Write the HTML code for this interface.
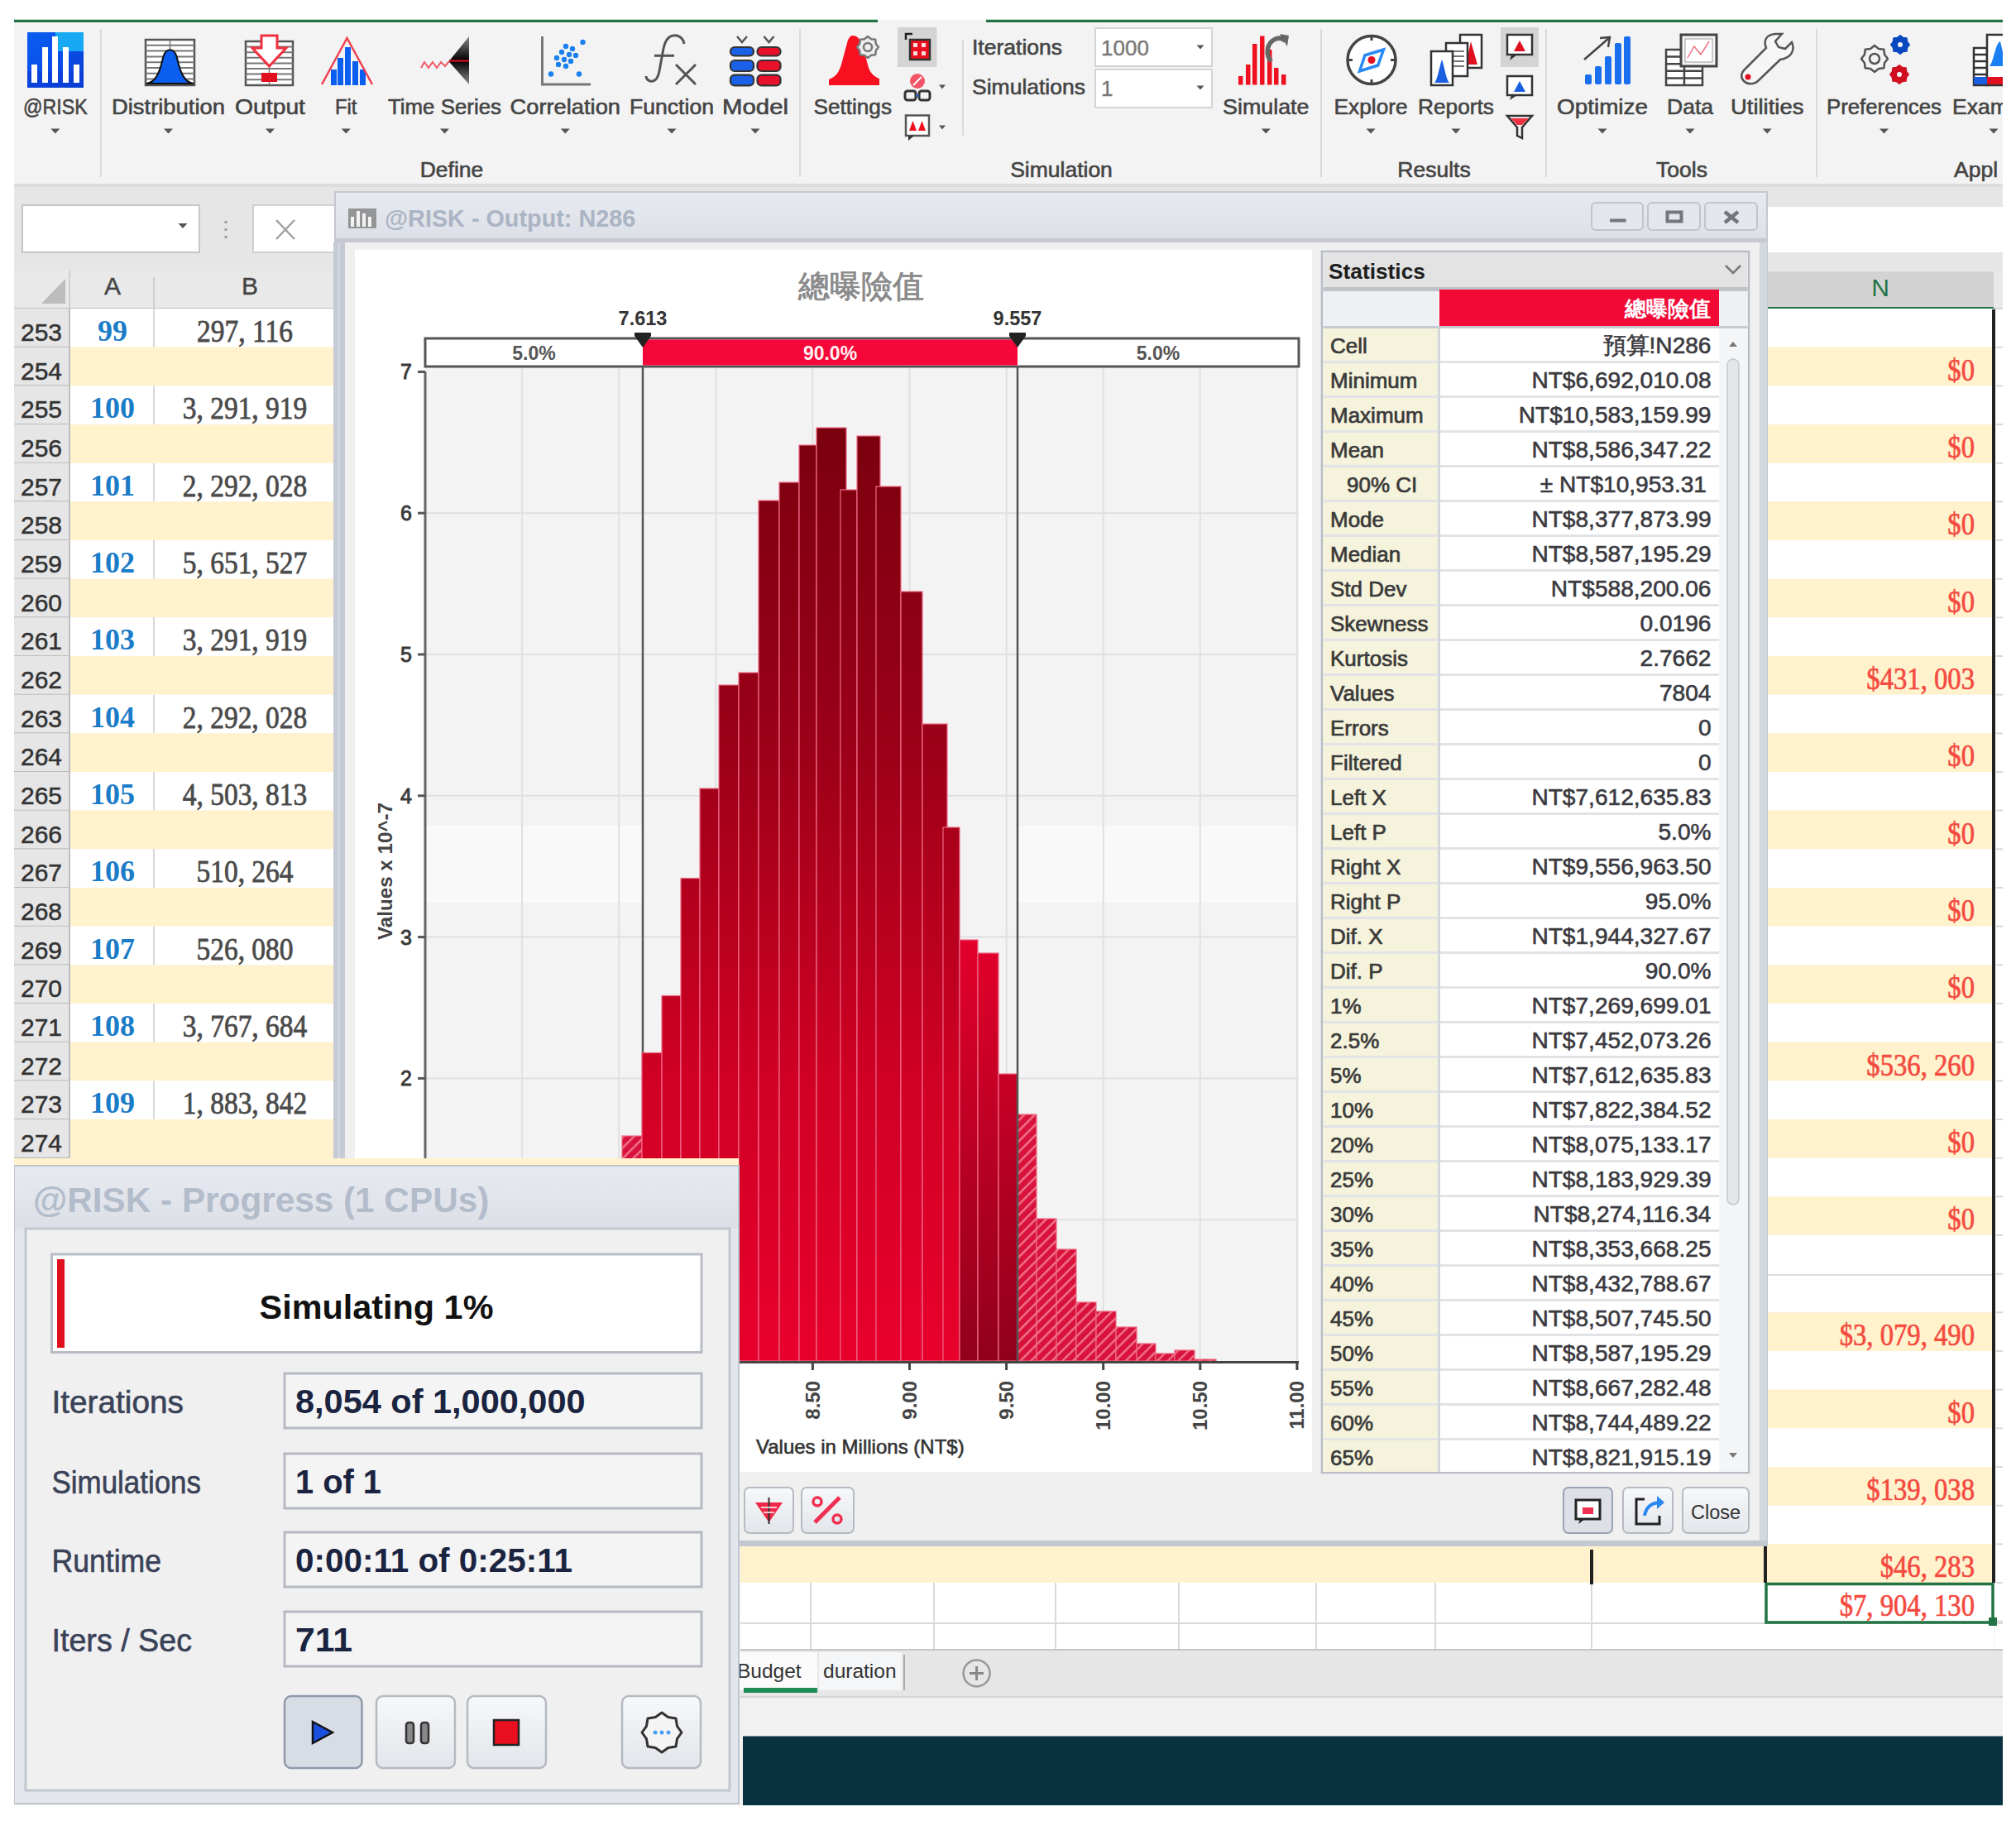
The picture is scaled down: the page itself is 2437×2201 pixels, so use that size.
<!DOCTYPE html>
<html><head><meta charset="utf-8"><title>@RISK Simulation</title>
<style>
*{margin:0;padding:0}
html,body{width:2437px;height:2201px;overflow:hidden;background:#fff}
svg{position:absolute;left:0;top:0}
</style></head><body>
<svg width="2437" height="2201" viewBox="0 0 2437 2201">
<defs>
<linearGradient id="barg" gradientUnits="userSpaceOnUse" x1="0" y1="510" x2="0" y2="1645">
<stop offset="0" stop-color="#7a000e"/><stop offset="0.35" stop-color="#9c0018"/><stop offset="0.7" stop-color="#d00024"/><stop offset="1" stop-color="#e8002c"/></linearGradient>
<pattern id="hatch" patternUnits="userSpaceOnUse" width="9" height="9" patternTransform="rotate(45)">
<rect width="9" height="9" fill="#d8123a"/><rect width="2.5" height="9" fill="#f0708a"/></pattern>
<linearGradient id="barg2" gradientUnits="userSpaceOnUse" x1="1160" y1="1130" x2="1230" y2="1645">
<stop offset="0" stop-color="#e4002c"/><stop offset="1" stop-color="#90001a"/></linearGradient>
<linearGradient id="titleg" x1="0" y1="0" x2="0" y2="1"><stop offset="0" stop-color="#e7eaf0"/><stop offset="1" stop-color="#dcdfe5"/></linearGradient>
<linearGradient id="btng" x1="0" y1="0" x2="0" y2="1"><stop offset="0" stop-color="#f7f8fa"/><stop offset="1" stop-color="#e2e5ea"/></linearGradient>
<linearGradient id="riskg" x1="0" y1="0" x2="1" y2="1"><stop offset="0" stop-color="#0a5ef0"/><stop offset="0.5" stop-color="#0a4ee8"/><stop offset="1" stop-color="#0a3fd0"/></linearGradient>
</defs>

<rect x="17" y="24" width="2404.00" height="2158.00" fill="#f3f3f3" />
<rect x="17" y="23.5" width="1044.00" height="3.50" fill="#217346" />
<rect x="1192" y="23.5" width="1229.00" height="3.50" fill="#217346" />
<rect x="17" y="27" width="2404.00" height="195.00" fill="#f3f3f3" />
<rect x="17" y="222" width="2404.00" height="4.00" fill="#dcdcdc" />
<text x="28" y="137.5" font-family="Liberation Sans" font-size="26.5" fill="#444" stroke="#444" stroke-width="0.6" text-anchor="start" textLength="77.6" lengthAdjust="spacingAndGlyphs">@RISK</text>
<path d="M61.3,155.5 L72.3,155.5 L66.8,161.5 Z" fill="#555" />
<text x="135" y="137.5" font-family="Liberation Sans" font-size="26.5" fill="#444" stroke="#444" stroke-width="0.6" text-anchor="start" textLength="137.0" lengthAdjust="spacingAndGlyphs">Distribution</text>
<path d="M198.0,155.5 L209.0,155.5 L203.5,161.5 Z" fill="#555" />
<text x="284" y="137.5" font-family="Liberation Sans" font-size="26.5" fill="#444" stroke="#444" stroke-width="0.6" text-anchor="start" textLength="85.0" lengthAdjust="spacingAndGlyphs">Output</text>
<path d="M321.0,155.5 L332.0,155.5 L326.5,161.5 Z" fill="#555" />
<text x="405" y="137.5" font-family="Liberation Sans" font-size="26.5" fill="#444" stroke="#444" stroke-width="0.6" text-anchor="start" textLength="26.5" lengthAdjust="spacingAndGlyphs">Fit</text>
<path d="M412.75,155.5 L423.75,155.5 L418.25,161.5 Z" fill="#555" />
<text x="469" y="137.5" font-family="Liberation Sans" font-size="26.5" fill="#444" stroke="#444" stroke-width="0.6" text-anchor="start" textLength="137.0" lengthAdjust="spacingAndGlyphs">Time Series</text>
<path d="M532.0,155.5 L543.0,155.5 L537.5,161.5 Z" fill="#555" />
<text x="616.6" y="137.5" font-family="Liberation Sans" font-size="26.5" fill="#444" stroke="#444" stroke-width="0.6" text-anchor="start" textLength="133.4" lengthAdjust="spacingAndGlyphs">Correlation</text>
<path d="M677.8,155.5 L688.8,155.5 L683.3,161.5 Z" fill="#555" />
<text x="761" y="137.5" font-family="Liberation Sans" font-size="26.5" fill="#444" stroke="#444" stroke-width="0.6" text-anchor="start" textLength="102.0" lengthAdjust="spacingAndGlyphs">Function</text>
<path d="M806.5,155.5 L817.5,155.5 L812.0,161.5 Z" fill="#555" />
<text x="873" y="137.5" font-family="Liberation Sans" font-size="26.5" fill="#444" stroke="#444" stroke-width="0.6" text-anchor="start" textLength="80.0" lengthAdjust="spacingAndGlyphs">Model</text>
<path d="M907.5,155.5 L918.5,155.5 L913.0,161.5 Z" fill="#555" />
<text x="983.5" y="137.5" font-family="Liberation Sans" font-size="26.5" fill="#444" stroke="#444" stroke-width="0.6" text-anchor="start" textLength="94.5" lengthAdjust="spacingAndGlyphs">Settings</text>
<text x="1478" y="137.5" font-family="Liberation Sans" font-size="26.5" fill="#444" stroke="#444" stroke-width="0.6" text-anchor="start" textLength="104.5" lengthAdjust="spacingAndGlyphs">Simulate</text>
<path d="M1524.75,155.5 L1535.75,155.5 L1530.25,161.5 Z" fill="#555" />
<text x="1612.5" y="137.5" font-family="Liberation Sans" font-size="26.5" fill="#444" stroke="#444" stroke-width="0.6" text-anchor="start" textLength="89.2" lengthAdjust="spacingAndGlyphs">Explore</text>
<path d="M1651.6,155.5 L1662.6,155.5 L1657.1,161.5 Z" fill="#555" />
<text x="1714" y="137.5" font-family="Liberation Sans" font-size="26.5" fill="#444" stroke="#444" stroke-width="0.6" text-anchor="start" textLength="92.0" lengthAdjust="spacingAndGlyphs">Reports</text>
<path d="M1754.5,155.5 L1765.5,155.5 L1760.0,161.5 Z" fill="#555" />
<text x="1882" y="137.5" font-family="Liberation Sans" font-size="26.5" fill="#444" stroke="#444" stroke-width="0.6" text-anchor="start" textLength="110.0" lengthAdjust="spacingAndGlyphs">Optimize</text>
<path d="M1931.5,155.5 L1942.5,155.5 L1937.0,161.5 Z" fill="#555" />
<text x="2015" y="137.5" font-family="Liberation Sans" font-size="26.5" fill="#444" stroke="#444" stroke-width="0.6" text-anchor="start" textLength="56.0" lengthAdjust="spacingAndGlyphs">Data</text>
<path d="M2037.5,155.5 L2048.5,155.5 L2043.0,161.5 Z" fill="#555" />
<text x="2092" y="137.5" font-family="Liberation Sans" font-size="26.5" fill="#444" stroke="#444" stroke-width="0.6" text-anchor="start" textLength="88.4" lengthAdjust="spacingAndGlyphs">Utilities</text>
<path d="M2130.7,155.5 L2141.7,155.5 L2136.2,161.5 Z" fill="#555" />
<text x="2208" y="137.5" font-family="Liberation Sans" font-size="26.5" fill="#444" stroke="#444" stroke-width="0.6" text-anchor="start" textLength="139.0" lengthAdjust="spacingAndGlyphs">Preferences</text>
<path d="M2272.0,155.5 L2283.0,155.5 L2277.5,161.5 Z" fill="#555" />
<text x="2360" y="137.5" font-family="Liberation Sans" font-size="26.5" fill="#444" stroke="#444" stroke-width="0.6" text-anchor="start" >Exam</text>
<path d="M2404.5,155.5 L2415.5,155.5 L2410,161.5 Z" fill="#555" />
<text x="546" y="214" font-family="Liberation Sans" font-size="26.5" fill="#444" stroke="#444" stroke-width="0.6" text-anchor="middle" >Define</text>
<text x="1283" y="214" font-family="Liberation Sans" font-size="26.5" fill="#444" stroke="#444" stroke-width="0.6" text-anchor="middle" >Simulation</text>
<text x="1733.5" y="214" font-family="Liberation Sans" font-size="26.5" fill="#444" stroke="#444" stroke-width="0.6" text-anchor="middle" >Results</text>
<text x="2033" y="214" font-family="Liberation Sans" font-size="26.5" fill="#444" stroke="#444" stroke-width="0.6" text-anchor="middle" >Tools</text>
<text x="2362" y="214" font-family="Liberation Sans" font-size="26.5" fill="#444" stroke="#444" stroke-width="0.6" text-anchor="start" >Appl</text>
<rect x="121" y="35" width="2.00" height="179.00" fill="#dadada" />
<rect x="966" y="35" width="2.00" height="179.00" fill="#dadada" />
<rect x="1596" y="35" width="2.00" height="179.00" fill="#dadada" />
<rect x="1868" y="35" width="2.00" height="179.00" fill="#dadada" />
<rect x="2195" y="35" width="2.00" height="179.00" fill="#dadada" />
<rect x="1163" y="48" width="2.00" height="116.00" fill="#dadada" />
<rect x="33" y="39" width="68.00" height="67.00" fill="url(#riskg)" />
<rect x="67" y="39" width="34.00" height="23.00" fill="#18b4f4" opacity="0.9"/>
<rect x="33" y="86" width="68.00" height="20.00" fill="#0a3cd6" opacity="0.6"/>
<rect x="38" y="78" width="7.00" height="22.00" fill="#ffffff" />
<rect x="51" y="57" width="7.00" height="43.00" fill="#ffffff" />
<rect x="63" y="44" width="7.00" height="56.00" fill="#ffffff" />
<rect x="76" y="57" width="7.00" height="43.00" fill="#ffffff" />
<rect x="89" y="78" width="7.00" height="22.00" fill="#ffffff" />
<rect x="176" y="48" width="59.00" height="55.00" fill="#ffffff" stroke="#555" stroke-width="2.5" />
<line x1="176" y1="54.8" x2="235" y2="54.8" stroke="#777" stroke-width="2" />
<line x1="176" y1="61.6" x2="235" y2="61.6" stroke="#777" stroke-width="2" />
<line x1="176" y1="68.4" x2="235" y2="68.4" stroke="#777" stroke-width="2" />
<line x1="176" y1="75.2" x2="235" y2="75.2" stroke="#777" stroke-width="2" />
<line x1="176" y1="82.0" x2="235" y2="82.0" stroke="#777" stroke-width="2" />
<line x1="176" y1="88.8" x2="235" y2="88.8" stroke="#777" stroke-width="2" />
<line x1="176" y1="95.6" x2="235" y2="95.6" stroke="#777" stroke-width="2" />
<line x1="205.5" y1="48" x2="205.5" y2="103" stroke="#777" stroke-width="1.5" />
<path d="M177,101 C188,100 193,88 197,70 C200,57 211,57 214,70 C218,88 223,100 234,101 Z" fill="#0a5ef0" stroke="#111" stroke-width="2" />
<rect x="297" y="50" width="57.00" height="53.00" fill="#ffffff" stroke="#555" stroke-width="2.5" />
<line x1="297" y1="56.6" x2="354" y2="56.6" stroke="#777" stroke-width="2" />
<line x1="297" y1="63.2" x2="354" y2="63.2" stroke="#777" stroke-width="2" />
<line x1="297" y1="69.8" x2="354" y2="69.8" stroke="#777" stroke-width="2" />
<line x1="297" y1="76.4" x2="354" y2="76.4" stroke="#777" stroke-width="2" />
<line x1="297" y1="83.0" x2="354" y2="83.0" stroke="#777" stroke-width="2" />
<line x1="297" y1="89.6" x2="354" y2="89.6" stroke="#777" stroke-width="2" />
<line x1="297" y1="96.19999999999999" x2="354" y2="96.19999999999999" stroke="#777" stroke-width="2" />
<line x1="325.5" y1="50" x2="325.5" y2="103" stroke="#777" stroke-width="1.5" />
<rect x="316" y="88" width="19.00" height="11.00" fill="#e01020" />
<path d="M316,43 L335,43 L335,58 L346,58 L325.5,80 L305,58 L316,58 Z" fill="#ffffff" stroke="#f03040" stroke-width="3" />
<rect x="400" y="84" width="7.00" height="19.00" fill="#0a5ef0" />
<rect x="408" y="70" width="7.00" height="33.00" fill="#0a5ef0" />
<rect x="417" y="57" width="7.00" height="46.00" fill="#0a5ef0" />
<rect x="426" y="74" width="7.00" height="29.00" fill="#0a5ef0" />
<rect x="435" y="84" width="7.00" height="19.00" fill="#0a5ef0" />
<path d="M389,102 L419.5,46 L450,102" fill="none" stroke="#f04050" stroke-width="2.5" />
<linearGradient id="tsg" x1="0" y1="0" x2="0" y2="1"><stop offset="0" stop-color="#888"/><stop offset="0.5" stop-color="#000"/><stop offset="1" stop-color="#888"/></linearGradient>
<path d="M542.5,74.3 L567,44 L567,102 Z" fill="url(#tsg)" />
<path d="M509,82 L513,75 L518,82 L523,75 L528,82 L533,75 L538,80 L543,74" fill="none" stroke="#f05a6a" stroke-width="2" />
<line x1="543" y1="73.5" x2="567" y2="73.5" stroke="#c01020" stroke-width="2.5" />
<path d="M655.5,44 L655.5,102 L714,102" fill="none" stroke="#777" stroke-width="3" />
<circle cx="704.5" cy="51" r="3.2" fill="#1a80f0"/>
<circle cx="666" cy="89.5" r="3.2" fill="#1a80f0"/>
<circle cx="700" cy="89.5" r="3.2" fill="#1a80f0"/>
<circle cx="684" cy="56" r="3.2" fill="#1a80f0"/>
<circle cx="692" cy="59" r="3.2" fill="#1a80f0"/>
<circle cx="679" cy="63" r="3.2" fill="#1a80f0"/>
<circle cx="688" cy="66" r="3.2" fill="#1a80f0"/>
<circle cx="696" cy="67" r="3.2" fill="#1a80f0"/>
<circle cx="673" cy="70" r="3.2" fill="#1a80f0"/>
<circle cx="682" cy="72" r="3.2" fill="#1a80f0"/>
<circle cx="690" cy="74" r="3.2" fill="#1a80f0"/>
<circle cx="675" cy="78" r="3.2" fill="#1a80f0"/>
<circle cx="684" cy="80" r="3.2" fill="#1a80f0"/>
<path d="M827,53 C826,46 820,42 814,43 C806,44 803,52 801,64 L797,86 C795,96 791,99 786,98 C783,97 781,95 781,92" fill="none" stroke="#555" stroke-width="3" />
<line x1="791" y1="67.3" x2="815" y2="67.3" stroke="#555" stroke-width="3" />
<path d="M817,78 L841,102 M841,78 L817,102" fill="none" stroke="#555" stroke-width="3" />
<rect x="883" y="57" width="28.00" height="10.50" fill="#1a60e8" stroke="#333" stroke-width="2.2" rx="5" />
<rect x="883" y="73" width="28.00" height="13.00" fill="#1a60e8" stroke="#333" stroke-width="2.2" rx="5" />
<rect x="883" y="90.6" width="28.00" height="12.80" fill="#1a60e8" stroke="#333" stroke-width="2.2" rx="5" />
<path d="M891,44 L897,51 L903,44" fill="none" stroke="#555" stroke-width="2.5" />
<rect x="915.5" y="57" width="28.00" height="10.50" fill="#e8102a" stroke="#333" stroke-width="2.2" rx="5" />
<rect x="915.5" y="73" width="28.00" height="13.00" fill="#e8102a" stroke="#333" stroke-width="2.2" rx="5" />
<rect x="915.5" y="90.6" width="28.00" height="12.80" fill="#e8102a" stroke="#333" stroke-width="2.2" rx="5" />
<path d="M923.5,44 L929.5,51 L935.5,44" fill="none" stroke="#555" stroke-width="2.5" />
<path d="M1002,103 L1002,96 C1010,93 1014,88 1017,78 L1024,52 C1026,44 1029,43 1031,43 C1036,43 1040,47 1043,56 L1050,82 C1053,90 1058,93 1063,95 L1063,103 Z" fill="#f81020" />
<polygon points="1062.0,57.0 1058.8,61.1 1058.2,66.2 1053.1,66.8 1049.0,70.0 1044.9,66.8 1039.8,66.2 1039.2,61.1 1036.0,57.0 1039.2,52.9 1039.8,47.8 1044.9,47.2 1049.0,44.0 1053.1,47.2 1058.2,47.8 1058.8,52.9" fill="#eeeeee" stroke="#777" stroke-width="2.5" stroke-linejoin="round"/>
<circle cx="1049" cy="57" r="5" fill="none" stroke="#777" stroke-width="2.5"/>
<rect x="1085" y="33" width="47.50" height="48.00" fill="#d4d4d4" />
<rect x="1100" y="48" width="24.00" height="24.00" fill="#e8101e" stroke="#333" stroke-width="2.5" />
<rect x="1104" y="52" width="5.00" height="5.00" fill="#ffdddd" />
<rect x="1114" y="52" width="5.00" height="5.00" fill="#ffdddd" />
<rect x="1104" y="62" width="5.00" height="5.00" fill="#ffdddd" />
<rect x="1114" y="62" width="5.00" height="5.00" fill="#ffdddd" />
<path d="M1095,48 L1095,41 L1103,41" fill="none" stroke="#222" stroke-width="2.5" />
<circle cx="1109" cy="98" r="9" fill="#f25566"/>
<line x1="1104" y1="103" x2="1114" y2="93" stroke="#fff" stroke-width="2" />
<rect x="1094" y="110" width="13.00" height="11.00" fill="#f3f3f3" stroke="#333" stroke-width="3" rx="3" />
<rect x="1111" y="110" width="13.00" height="11.00" fill="#f3f3f3" stroke="#333" stroke-width="3" rx="3" />
<line x1="1107" y1="115.5" x2="1111" y2="115.5" stroke="#2a60b0" stroke-width="3" />
<path d="M1135.0,102.5 L1143.0,102.5 L1139,107.5 Z" fill="#555" />
<rect x="1095" y="139.5" width="28.00" height="24.50" fill="#fff" stroke="#555" stroke-width="2.5" />
<path d="M1098,164 L1098,170 L1105,164" fill="#333" />
<path d="M1099,158 L1103.5,146 L1108,158 Z" fill="#f01020" />
<path d="M1110,158 L1114.5,146 L1119,158 Z" fill="#f01020" />
<path d="M1135.0,151.5 L1143.0,151.5 L1139,156.5 Z" fill="#555" />
<text x="1175" y="66" font-family="Liberation Sans" font-size="26.5" fill="#444" stroke="#444" stroke-width="0.6" text-anchor="start" >Iterations</text>
<text x="1175" y="114" font-family="Liberation Sans" font-size="26.5" fill="#444" stroke="#444" stroke-width="0.6" text-anchor="start" >Simulations</text>
<rect x="1324" y="34" width="141.00" height="46.00" fill="#ffffff" stroke="#d4d4d4" stroke-width="2" />
<rect x="1324" y="84" width="141.00" height="46.00" fill="#ffffff" stroke="#d4d4d4" stroke-width="2" />
<text x="1331" y="67" font-family="Liberation Sans" font-size="26" fill="#777" stroke="#777" stroke-width="0.4" text-anchor="start" >1000</text>
<text x="1331" y="116" font-family="Liberation Sans" font-size="26" fill="#777" stroke="#777" stroke-width="0.4" text-anchor="start" >1</text>
<path d="M1446.5,54.5 L1455.5,54.5 L1451,59.5 Z" fill="#555" />
<path d="M1446.5,103.5 L1455.5,103.5 L1451,108.5 Z" fill="#555" />
<rect x="1497" y="92" width="5.50" height="10.50" fill="#f01020" />
<rect x="1506" y="78" width="5.50" height="24.50" fill="#f01020" />
<rect x="1514" y="53" width="5.50" height="49.50" fill="#f01020" />
<rect x="1523" y="43.5" width="5.50" height="59.00" fill="#f01020" />
<rect x="1532" y="60" width="5.50" height="42.50" fill="#f01020" />
<rect x="1540" y="82" width="5.50" height="20.50" fill="#f01020" />
<rect x="1549" y="90" width="5.50" height="12.50" fill="#f01020" />
<path d="M1537,74 C1530,68 1530,52 1542,47 C1548,45 1552,47 1554,50" fill="none" stroke="#666" stroke-width="5.5" />
<path d="M1547,41 L1558,43 L1556,56 Z" fill="#666" />
<circle cx="1658" cy="72.5" r="29" fill="#fff" stroke="#444" stroke-width="3.5"/>
<line x1="1658" y1="43.5" x2="1658" y2="49" stroke="#444" stroke-width="3" />
<line x1="1658" y1="96" x2="1658" y2="101.5" stroke="#444" stroke-width="3" />
<line x1="1629" y1="72.5" x2="1635" y2="72.5" stroke="#444" stroke-width="3" />
<line x1="1681" y1="72.5" x2="1687" y2="72.5" stroke="#444" stroke-width="3" />
<path d="M1643.5,86 L1650,66.7 L1672.5,60 L1665.7,79 Z" fill="#fff" stroke="#2a8af5" stroke-width="3.5" />
<circle cx="1658" cy="72.5" r="4.5" fill="#e01020"/>
<rect x="1765" y="42" width="26.00" height="40.00" fill="#fff" stroke="#333" stroke-width="2.5" />
<path d="M1778,50 L1786,78 L1772,78 Z" fill="#e01020" />
<rect x="1748" y="52" width="26.00" height="40.00" fill="#fff" stroke="#333" stroke-width="2.5" />
<line x1="1752" y1="62" x2="1770" y2="62" stroke="#777" stroke-width="2" />
<line x1="1752" y1="68" x2="1770" y2="68" stroke="#777" stroke-width="2" />
<line x1="1752" y1="74" x2="1770" y2="74" stroke="#777" stroke-width="2" />
<line x1="1752" y1="80" x2="1770" y2="80" stroke="#777" stroke-width="2" />
<rect x="1730" y="62" width="26.00" height="41.00" fill="#fff" stroke="#333" stroke-width="2.5" />
<path d="M1734,100 C1738,96 1740,80 1743,72 C1746,80 1748,96 1752,100 Z" fill="#1a5fe0" />
<rect x="1814" y="33" width="46.00" height="48.00" fill="#d4d4d4" />
<rect x="1822" y="42" width="30.00" height="24.00" fill="#fff" stroke="#333" stroke-width="2.5" />
<path d="M1827,66 L1825,73 L1834,66" fill="#333" />
<path d="M1830,62 L1837,49 L1844,62 Z" fill="#e01020" />
<rect x="1822" y="92" width="30.00" height="23.00" fill="#fff" stroke="#333" stroke-width="2.5" />
<path d="M1827,115 L1825,121 L1834,115" fill="#333" />
<path d="M1830,111 L1837,98 L1844,111 Z" fill="#1a5fe0" />
<path d="M1822,140 L1852,140 L1840,154 L1840,167 L1834,164 L1834,154 Z" fill="none" stroke="#333" stroke-width="2.5" />
<path d="M1826,143 L1848,143 L1840,151 L1834,151 Z" fill="#f03040" />
<rect x="1916" y="90" width="8.00" height="12.00" fill="#1a6ef0" rx="2" />
<rect x="1928" y="80" width="8.00" height="22.00" fill="#1a6ef0" rx="2" />
<rect x="1940" y="68" width="8.00" height="34.00" fill="#1a6ef0" rx="2" />
<rect x="1952" y="52" width="8.00" height="50.00" fill="#1a6ef0" rx="2" />
<rect x="1963" y="44" width="8.00" height="58.00" fill="#1a6ef0" rx="2" />
<path d="M1915,72 L1945,46" fill="none" stroke="#444" stroke-width="2.5" />
<path d="M1934,46 L1946,45 L1944,57" fill="none" stroke="#444" stroke-width="2.5" />
<rect x="2014" y="60" width="44.00" height="43.00" fill="#fff" stroke="#444" stroke-width="2.5" />
<line x1="2014" y1="68.6" x2="2058" y2="68.6" stroke="#444" stroke-width="2.5" />
<line x1="2014" y1="77.2" x2="2058" y2="77.2" stroke="#444" stroke-width="2.5" />
<line x1="2014" y1="85.8" x2="2058" y2="85.8" stroke="#444" stroke-width="2.5" />
<line x1="2014" y1="94.4" x2="2058" y2="94.4" stroke="#444" stroke-width="2.5" />
<line x1="2036" y1="60" x2="2036" y2="103" stroke="#444" stroke-width="2.5" />
<rect x="2032" y="42" width="43.00" height="38.00" fill="#f4f4f4" stroke="#444" stroke-width="3" />
<rect x="2037" y="47" width="33.00" height="28.00" fill="#fff" stroke="#999" stroke-width="1" />
<path d="M2040,70 L2048,56 L2056,66 L2066,50" fill="none" stroke="#f07080" stroke-width="1.5" />
<path d="M2108,98 C2104,94 2104,88 2110,83 L2135,58 C2131,48 2136,42 2146,41 L2154,41 L2146,50 L2150,57 L2158,59 L2166,51 C2170,60 2166,70 2152,72 L2126,97 C2120,103 2112,102 2108,98 Z" fill="#f6f6f6" stroke="#555" stroke-width="2.5" />
<circle cx="2113" cy="93" r="3.5" fill="#e01020"/>
<polygon points="2282.0,71.0 2278.1,76.0 2277.3,82.3 2271.0,83.1 2266.0,87.0 2261.0,83.1 2254.7,82.3 2253.9,76.0 2250.0,71.0 2253.9,66.0 2254.7,59.7 2261.0,58.9 2266.0,55.0 2271.0,58.9 2277.3,59.7 2278.1,66.0" fill="#f3f3f3" stroke="#555" stroke-width="2.5" stroke-linejoin="round"/>
<circle cx="2266" cy="71" r="6" fill="none" stroke="#555" stroke-width="2.5"/>
<polygon points="2308.0,54.0 2305.3,57.5 2304.8,61.8 2300.5,62.3 2297.0,65.0 2293.5,62.3 2289.2,61.8 2288.7,57.5 2286.0,54.0 2288.7,50.5 2289.2,46.2 2293.5,45.7 2297.0,43.0 2300.5,45.7 2304.8,46.2 2305.3,50.5" fill="#0a48c0" stroke="#0a48c0" stroke-width="2" stroke-linejoin="round"/>
<circle cx="2297" cy="54" r="3" fill="#f3f3f3"/>
<polygon points="2307.0,90.0 2304.3,93.5 2303.8,97.8 2299.5,98.3 2296.0,101.0 2292.5,98.3 2288.2,97.8 2287.7,93.5 2285.0,90.0 2287.7,86.5 2288.2,82.2 2292.5,81.7 2296.0,79.0 2299.5,81.7 2303.8,82.2 2304.3,86.5" fill="#d01020" stroke="#d01020" stroke-width="2" stroke-linejoin="round"/>
<circle cx="2296" cy="90" r="3" fill="#f3f3f3"/>
<svg x="2380" y="38" width="41" height="70" viewBox="2380 38 41 70">
<rect x="2386" y="58" width="16.00" height="45.00" fill="#fff" stroke="#333" stroke-width="2.5" />
<line x1="2386" y1="66" x2="2402" y2="66" stroke="#333" stroke-width="2.5" />
<line x1="2386" y1="74" x2="2402" y2="74" stroke="#333" stroke-width="2.5" />
<line x1="2386" y1="82" x2="2402" y2="82" stroke="#333" stroke-width="2.5" />
<line x1="2386" y1="90" x2="2402" y2="90" stroke="#333" stroke-width="2.5" />
<rect x="2402" y="42" width="38.00" height="61.00" fill="#fff" stroke="#333" stroke-width="2.5" />
<path d="M2405,80 C2410,75 2412,52 2418,50 L2425,80 Z" fill="#1a7ff0" />
<rect x="2386" y="93" width="16.00" height="9.00" fill="#1a5fe0" />
<rect x="2402" y="93" width="38.00" height="9.00" fill="#e01020" />
</svg>
<rect x="17" y="226" width="2404.00" height="101.00" fill="#e6e6e6" />
<rect x="27" y="248" width="214.00" height="57.00" fill="#ffffff" stroke="#c6c6c6" stroke-width="2" />
<path d="M215.5,270.0 L226.5,270.0 L221,276.0 Z" fill="#555" />
<rect x="271.5" y="267" width="3.00" height="3.00" fill="#9a9a9a" />
<rect x="271.5" y="276" width="3.00" height="3.00" fill="#9a9a9a" />
<rect x="271.5" y="285" width="3.00" height="3.00" fill="#9a9a9a" />
<rect x="306" y="248" width="114.00" height="57.00" fill="#ffffff" stroke="#d0d0d0" stroke-width="2" />
<path d="M334,266 L356,289 M356,266 L334,289" fill="none" stroke="#a0a0a0" stroke-width="2.5" />
<rect x="2137" y="250" width="284.00" height="55.00" fill="#ffffff" />
<rect x="17" y="327" width="2404.00" height="46.00" fill="#e9e9e9" />
<path d="M79,337 L79,367 L50,367 Z" fill="#bdbdbd" />
<line x1="84" y1="327" x2="84" y2="373" stroke="#cfcfcf" stroke-width="2" />
<line x1="186" y1="335" x2="186" y2="373" stroke="#cfcfcf" stroke-width="2" />
<text x="136" y="356" font-family="Liberation Sans" font-size="30" fill="#444" stroke="#444" stroke-width="0.4" text-anchor="middle" >A</text>
<text x="302" y="356" font-family="Liberation Sans" font-size="30" fill="#444" stroke="#444" stroke-width="0.4" text-anchor="middle" >B</text>
<rect x="17" y="372" width="2404.00" height="2.00" fill="#c4c4c4" />
<rect x="2137" y="328" width="273.00" height="43.00" fill="#d3d3d3" />
<text x="2273" y="358" font-family="Liberation Sans" font-size="30" fill="#217346" text-anchor="middle" >N</text>
<rect x="2137" y="371" width="273.00" height="4.00" fill="#217346" />
<rect x="84" y="373.0" width="336.00" height="46.67" fill="#ffffff" />
<rect x="17" y="373.0" width="67.00" height="46.67" fill="#e6e6e6" />
<line x1="17" y1="419.66700000000003" x2="84" y2="419.66700000000003" stroke="#bdbdbd" stroke-width="2" />
<line x1="186" y1="373.0" x2="186" y2="419.66700000000003" stroke="#d8d8d8" stroke-width="2" />
<text x="25" y="412.0" font-family="Liberation Sans" font-size="30" fill="#333" stroke="#333" stroke-width="0.5" text-anchor="start" >253</text>
<rect x="84" y="419.66700000000003" width="336.00" height="46.67" fill="#fff2cc" />
<rect x="17" y="419.66700000000003" width="67.00" height="46.67" fill="#e6e6e6" />
<line x1="17" y1="466.33400000000006" x2="84" y2="466.33400000000006" stroke="#bdbdbd" stroke-width="2" />
<text x="25" y="458.66700000000003" font-family="Liberation Sans" font-size="30" fill="#333" stroke="#333" stroke-width="0.5" text-anchor="start" >254</text>
<rect x="84" y="466.334" width="336.00" height="46.67" fill="#ffffff" />
<rect x="17" y="466.334" width="67.00" height="46.67" fill="#e6e6e6" />
<line x1="17" y1="513.001" x2="84" y2="513.001" stroke="#bdbdbd" stroke-width="2" />
<line x1="186" y1="466.334" x2="186" y2="513.001" stroke="#d8d8d8" stroke-width="2" />
<text x="25" y="505.334" font-family="Liberation Sans" font-size="30" fill="#333" stroke="#333" stroke-width="0.5" text-anchor="start" >255</text>
<rect x="84" y="513.001" width="336.00" height="46.67" fill="#fff2cc" />
<rect x="17" y="513.001" width="67.00" height="46.67" fill="#e6e6e6" />
<line x1="17" y1="559.668" x2="84" y2="559.668" stroke="#bdbdbd" stroke-width="2" />
<text x="25" y="552.001" font-family="Liberation Sans" font-size="30" fill="#333" stroke="#333" stroke-width="0.5" text-anchor="start" >256</text>
<rect x="84" y="559.668" width="336.00" height="46.67" fill="#ffffff" />
<rect x="17" y="559.668" width="67.00" height="46.67" fill="#e6e6e6" />
<line x1="17" y1="606.335" x2="84" y2="606.335" stroke="#bdbdbd" stroke-width="2" />
<line x1="186" y1="559.668" x2="186" y2="606.335" stroke="#d8d8d8" stroke-width="2" />
<text x="25" y="598.668" font-family="Liberation Sans" font-size="30" fill="#333" stroke="#333" stroke-width="0.5" text-anchor="start" >257</text>
<rect x="84" y="606.335" width="336.00" height="46.67" fill="#fff2cc" />
<rect x="17" y="606.335" width="67.00" height="46.67" fill="#e6e6e6" />
<line x1="17" y1="653.0020000000001" x2="84" y2="653.0020000000001" stroke="#bdbdbd" stroke-width="2" />
<text x="25" y="645.335" font-family="Liberation Sans" font-size="30" fill="#333" stroke="#333" stroke-width="0.5" text-anchor="start" >258</text>
<rect x="84" y="653.002" width="336.00" height="46.67" fill="#ffffff" />
<rect x="17" y="653.002" width="67.00" height="46.67" fill="#e6e6e6" />
<line x1="17" y1="699.669" x2="84" y2="699.669" stroke="#bdbdbd" stroke-width="2" />
<line x1="186" y1="653.002" x2="186" y2="699.669" stroke="#d8d8d8" stroke-width="2" />
<text x="25" y="692.002" font-family="Liberation Sans" font-size="30" fill="#333" stroke="#333" stroke-width="0.5" text-anchor="start" >259</text>
<rect x="84" y="699.669" width="336.00" height="46.67" fill="#fff2cc" />
<rect x="17" y="699.669" width="67.00" height="46.67" fill="#e6e6e6" />
<line x1="17" y1="746.336" x2="84" y2="746.336" stroke="#bdbdbd" stroke-width="2" />
<text x="25" y="738.669" font-family="Liberation Sans" font-size="30" fill="#333" stroke="#333" stroke-width="0.5" text-anchor="start" >260</text>
<rect x="84" y="746.336" width="336.00" height="46.67" fill="#ffffff" />
<rect x="17" y="746.336" width="67.00" height="46.67" fill="#e6e6e6" />
<line x1="17" y1="793.003" x2="84" y2="793.003" stroke="#bdbdbd" stroke-width="2" />
<line x1="186" y1="746.336" x2="186" y2="793.003" stroke="#d8d8d8" stroke-width="2" />
<text x="25" y="785.336" font-family="Liberation Sans" font-size="30" fill="#333" stroke="#333" stroke-width="0.5" text-anchor="start" >261</text>
<rect x="84" y="793.003" width="336.00" height="46.67" fill="#fff2cc" />
<rect x="17" y="793.003" width="67.00" height="46.67" fill="#e6e6e6" />
<line x1="17" y1="839.6700000000001" x2="84" y2="839.6700000000001" stroke="#bdbdbd" stroke-width="2" />
<text x="25" y="832.003" font-family="Liberation Sans" font-size="30" fill="#333" stroke="#333" stroke-width="0.5" text-anchor="start" >262</text>
<rect x="84" y="839.6700000000001" width="336.00" height="46.67" fill="#ffffff" />
<rect x="17" y="839.6700000000001" width="67.00" height="46.67" fill="#e6e6e6" />
<line x1="17" y1="886.3370000000001" x2="84" y2="886.3370000000001" stroke="#bdbdbd" stroke-width="2" />
<line x1="186" y1="839.6700000000001" x2="186" y2="886.3370000000001" stroke="#d8d8d8" stroke-width="2" />
<text x="25" y="878.6700000000001" font-family="Liberation Sans" font-size="30" fill="#333" stroke="#333" stroke-width="0.5" text-anchor="start" >263</text>
<rect x="84" y="886.337" width="336.00" height="46.67" fill="#fff2cc" />
<rect x="17" y="886.337" width="67.00" height="46.67" fill="#e6e6e6" />
<line x1="17" y1="933.004" x2="84" y2="933.004" stroke="#bdbdbd" stroke-width="2" />
<text x="25" y="925.337" font-family="Liberation Sans" font-size="30" fill="#333" stroke="#333" stroke-width="0.5" text-anchor="start" >264</text>
<rect x="84" y="933.004" width="336.00" height="46.67" fill="#ffffff" />
<rect x="17" y="933.004" width="67.00" height="46.67" fill="#e6e6e6" />
<line x1="17" y1="979.671" x2="84" y2="979.671" stroke="#bdbdbd" stroke-width="2" />
<line x1="186" y1="933.004" x2="186" y2="979.671" stroke="#d8d8d8" stroke-width="2" />
<text x="25" y="972.004" font-family="Liberation Sans" font-size="30" fill="#333" stroke="#333" stroke-width="0.5" text-anchor="start" >265</text>
<rect x="84" y="979.671" width="336.00" height="46.67" fill="#fff2cc" />
<rect x="17" y="979.671" width="67.00" height="46.67" fill="#e6e6e6" />
<line x1="17" y1="1026.338" x2="84" y2="1026.338" stroke="#bdbdbd" stroke-width="2" />
<text x="25" y="1018.671" font-family="Liberation Sans" font-size="30" fill="#333" stroke="#333" stroke-width="0.5" text-anchor="start" >266</text>
<rect x="84" y="1026.338" width="336.00" height="46.67" fill="#ffffff" />
<rect x="17" y="1026.338" width="67.00" height="46.67" fill="#e6e6e6" />
<line x1="17" y1="1073.0049999999999" x2="84" y2="1073.0049999999999" stroke="#bdbdbd" stroke-width="2" />
<line x1="186" y1="1026.338" x2="186" y2="1073.0049999999999" stroke="#d8d8d8" stroke-width="2" />
<text x="25" y="1065.338" font-family="Liberation Sans" font-size="30" fill="#333" stroke="#333" stroke-width="0.5" text-anchor="start" >267</text>
<rect x="84" y="1073.005" width="336.00" height="46.67" fill="#fff2cc" />
<rect x="17" y="1073.005" width="67.00" height="46.67" fill="#e6e6e6" />
<line x1="17" y1="1119.672" x2="84" y2="1119.672" stroke="#bdbdbd" stroke-width="2" />
<text x="25" y="1112.005" font-family="Liberation Sans" font-size="30" fill="#333" stroke="#333" stroke-width="0.5" text-anchor="start" >268</text>
<rect x="84" y="1119.672" width="336.00" height="46.67" fill="#ffffff" />
<rect x="17" y="1119.672" width="67.00" height="46.67" fill="#e6e6e6" />
<line x1="17" y1="1166.339" x2="84" y2="1166.339" stroke="#bdbdbd" stroke-width="2" />
<line x1="186" y1="1119.672" x2="186" y2="1166.339" stroke="#d8d8d8" stroke-width="2" />
<text x="25" y="1158.672" font-family="Liberation Sans" font-size="30" fill="#333" stroke="#333" stroke-width="0.5" text-anchor="start" >269</text>
<rect x="84" y="1166.339" width="336.00" height="46.67" fill="#fff2cc" />
<rect x="17" y="1166.339" width="67.00" height="46.67" fill="#e6e6e6" />
<line x1="17" y1="1213.0059999999999" x2="84" y2="1213.0059999999999" stroke="#bdbdbd" stroke-width="2" />
<text x="25" y="1205.339" font-family="Liberation Sans" font-size="30" fill="#333" stroke="#333" stroke-width="0.5" text-anchor="start" >270</text>
<rect x="84" y="1213.006" width="336.00" height="46.67" fill="#ffffff" />
<rect x="17" y="1213.006" width="67.00" height="46.67" fill="#e6e6e6" />
<line x1="17" y1="1259.673" x2="84" y2="1259.673" stroke="#bdbdbd" stroke-width="2" />
<line x1="186" y1="1213.006" x2="186" y2="1259.673" stroke="#d8d8d8" stroke-width="2" />
<text x="25" y="1252.006" font-family="Liberation Sans" font-size="30" fill="#333" stroke="#333" stroke-width="0.5" text-anchor="start" >271</text>
<rect x="84" y="1259.673" width="336.00" height="46.67" fill="#fff2cc" />
<rect x="17" y="1259.673" width="67.00" height="46.67" fill="#e6e6e6" />
<line x1="17" y1="1306.34" x2="84" y2="1306.34" stroke="#bdbdbd" stroke-width="2" />
<text x="25" y="1298.673" font-family="Liberation Sans" font-size="30" fill="#333" stroke="#333" stroke-width="0.5" text-anchor="start" >272</text>
<rect x="84" y="1306.3400000000001" width="336.00" height="46.67" fill="#ffffff" />
<rect x="17" y="1306.3400000000001" width="67.00" height="46.67" fill="#e6e6e6" />
<line x1="17" y1="1353.007" x2="84" y2="1353.007" stroke="#bdbdbd" stroke-width="2" />
<line x1="186" y1="1306.3400000000001" x2="186" y2="1353.007" stroke="#d8d8d8" stroke-width="2" />
<text x="25" y="1345.3400000000001" font-family="Liberation Sans" font-size="30" fill="#333" stroke="#333" stroke-width="0.5" text-anchor="start" >273</text>
<rect x="84" y="1353.007" width="336.00" height="46.67" fill="#fff2cc" />
<rect x="17" y="1353.007" width="67.00" height="46.67" fill="#e6e6e6" />
<line x1="17" y1="1399.674" x2="84" y2="1399.674" stroke="#bdbdbd" stroke-width="2" />
<text x="25" y="1392.007" font-family="Liberation Sans" font-size="30" fill="#333" stroke="#333" stroke-width="0.5" text-anchor="start" >274</text>
<line x1="84" y1="373" x2="84" y2="1400" stroke="#bdbdbd" stroke-width="2" />
<text x="136" y="412.0" font-family="Liberation Serif" font-size="36" fill="#1b7cc8" font-weight="bold" text-anchor="middle" >99</text>
<text transform="translate(296,413.0) scale(0.88,1)" font-family="Liberation Serif" font-size="38" fill="#4a4a4a" stroke="#4a4a4a" stroke-width="0.8" text-anchor="middle">297, 116</text>
<text x="136" y="505.334" font-family="Liberation Serif" font-size="36" fill="#1b7cc8" font-weight="bold" text-anchor="middle" >100</text>
<text transform="translate(296,506.3) scale(0.88,1)" font-family="Liberation Serif" font-size="38" fill="#4a4a4a" stroke="#4a4a4a" stroke-width="0.8" text-anchor="middle">3, 291, 919</text>
<text x="136" y="598.668" font-family="Liberation Serif" font-size="36" fill="#1b7cc8" font-weight="bold" text-anchor="middle" >101</text>
<text transform="translate(296,599.7) scale(0.88,1)" font-family="Liberation Serif" font-size="38" fill="#4a4a4a" stroke="#4a4a4a" stroke-width="0.8" text-anchor="middle">2, 292, 028</text>
<text x="136" y="692.002" font-family="Liberation Serif" font-size="36" fill="#1b7cc8" font-weight="bold" text-anchor="middle" >102</text>
<text transform="translate(296,693.0) scale(0.88,1)" font-family="Liberation Serif" font-size="38" fill="#4a4a4a" stroke="#4a4a4a" stroke-width="0.8" text-anchor="middle">5, 651, 527</text>
<text x="136" y="785.336" font-family="Liberation Serif" font-size="36" fill="#1b7cc8" font-weight="bold" text-anchor="middle" >103</text>
<text transform="translate(296,786.3) scale(0.88,1)" font-family="Liberation Serif" font-size="38" fill="#4a4a4a" stroke="#4a4a4a" stroke-width="0.8" text-anchor="middle">3, 291, 919</text>
<text x="136" y="878.6700000000001" font-family="Liberation Serif" font-size="36" fill="#1b7cc8" font-weight="bold" text-anchor="middle" >104</text>
<text transform="translate(296,879.7) scale(0.88,1)" font-family="Liberation Serif" font-size="38" fill="#4a4a4a" stroke="#4a4a4a" stroke-width="0.8" text-anchor="middle">2, 292, 028</text>
<text x="136" y="972.004" font-family="Liberation Serif" font-size="36" fill="#1b7cc8" font-weight="bold" text-anchor="middle" >105</text>
<text transform="translate(296,973.0) scale(0.88,1)" font-family="Liberation Serif" font-size="38" fill="#4a4a4a" stroke="#4a4a4a" stroke-width="0.8" text-anchor="middle">4, 503, 813</text>
<text x="136" y="1065.338" font-family="Liberation Serif" font-size="36" fill="#1b7cc8" font-weight="bold" text-anchor="middle" >106</text>
<text transform="translate(296,1066.3) scale(0.88,1)" font-family="Liberation Serif" font-size="38" fill="#4a4a4a" stroke="#4a4a4a" stroke-width="0.8" text-anchor="middle">510, 264</text>
<text x="136" y="1158.672" font-family="Liberation Serif" font-size="36" fill="#1b7cc8" font-weight="bold" text-anchor="middle" >107</text>
<text transform="translate(296,1159.7) scale(0.88,1)" font-family="Liberation Serif" font-size="38" fill="#4a4a4a" stroke="#4a4a4a" stroke-width="0.8" text-anchor="middle">526, 080</text>
<text x="136" y="1252.006" font-family="Liberation Serif" font-size="36" fill="#1b7cc8" font-weight="bold" text-anchor="middle" >108</text>
<text transform="translate(296,1253.0) scale(0.88,1)" font-family="Liberation Serif" font-size="38" fill="#4a4a4a" stroke="#4a4a4a" stroke-width="0.8" text-anchor="middle">3, 767, 684</text>
<text x="136" y="1345.3400000000001" font-family="Liberation Serif" font-size="36" fill="#1b7cc8" font-weight="bold" text-anchor="middle" >109</text>
<text transform="translate(296,1346.3) scale(0.88,1)" font-family="Liberation Serif" font-size="38" fill="#4a4a4a" stroke="#4a4a4a" stroke-width="0.8" text-anchor="middle">1, 883, 842</text>
<rect x="2137" y="373.0" width="273.00" height="46.67" fill="#ffffff" />
<rect x="2137" y="419.66700000000003" width="273.00" height="46.67" fill="#fff2cc" />
<rect x="2137" y="466.334" width="273.00" height="46.67" fill="#ffffff" />
<rect x="2137" y="513.001" width="273.00" height="46.67" fill="#fff2cc" />
<rect x="2137" y="559.668" width="273.00" height="46.67" fill="#ffffff" />
<rect x="2137" y="606.335" width="273.00" height="46.67" fill="#fff2cc" />
<rect x="2137" y="653.002" width="273.00" height="46.67" fill="#ffffff" />
<rect x="2137" y="699.669" width="273.00" height="46.67" fill="#fff2cc" />
<rect x="2137" y="746.336" width="273.00" height="46.67" fill="#ffffff" />
<rect x="2137" y="793.003" width="273.00" height="46.67" fill="#fff2cc" />
<rect x="2137" y="839.6700000000001" width="273.00" height="46.67" fill="#ffffff" />
<rect x="2137" y="886.337" width="273.00" height="46.67" fill="#fff2cc" />
<rect x="2137" y="933.004" width="273.00" height="46.67" fill="#ffffff" />
<rect x="2137" y="979.671" width="273.00" height="46.67" fill="#fff2cc" />
<rect x="2137" y="1026.338" width="273.00" height="46.67" fill="#ffffff" />
<rect x="2137" y="1073.005" width="273.00" height="46.67" fill="#fff2cc" />
<rect x="2137" y="1119.672" width="273.00" height="46.67" fill="#ffffff" />
<rect x="2137" y="1166.339" width="273.00" height="46.67" fill="#fff2cc" />
<rect x="2137" y="1213.006" width="273.00" height="46.67" fill="#ffffff" />
<rect x="2137" y="1259.673" width="273.00" height="46.67" fill="#fff2cc" />
<rect x="2137" y="1306.3400000000001" width="273.00" height="46.67" fill="#ffffff" />
<rect x="2137" y="1353.007" width="273.00" height="46.67" fill="#fff2cc" />
<rect x="2137" y="1399.674" width="273.00" height="46.67" fill="#ffffff" />
<rect x="2137" y="1446.3410000000001" width="273.00" height="46.67" fill="#fff2cc" />
<rect x="2137" y="1493.008" width="273.00" height="46.67" fill="#ffffff" />
<rect x="2137" y="1539.675" width="273.00" height="46.67" fill="#ffffff" />
<rect x="2137" y="1586.342" width="273.00" height="46.67" fill="#fff2cc" />
<rect x="2137" y="1633.009" width="273.00" height="46.67" fill="#ffffff" />
<rect x="2137" y="1679.676" width="273.00" height="46.67" fill="#fff2cc" />
<rect x="2137" y="1726.343" width="273.00" height="46.67" fill="#ffffff" />
<rect x="2137" y="1773.01" width="273.00" height="46.67" fill="#fff2cc" />
<rect x="2137" y="1819.6770000000001" width="273.00" height="46.67" fill="#ffffff" />
<rect x="2137" y="1866.344" width="273.00" height="46.67" fill="#fff2cc" />
<rect x="2137" y="1913.011" width="273.00" height="46.67" fill="#ffffff" />
<rect x="2137" y="1959.678" width="273.00" height="33.32" fill="#ffffff" />
<line x1="2137" y1="1541" x2="2410" y2="1541" stroke="#dedede" stroke-width="2" />
<text transform="translate(2387,459.7) scale(0.86,1)" font-family="Liberation Serif" font-size="38" fill="#f54a40" stroke="#f54a40" stroke-width="0.7" text-anchor="end">$0</text>
<text transform="translate(2387,553.0) scale(0.86,1)" font-family="Liberation Serif" font-size="38" fill="#f54a40" stroke="#f54a40" stroke-width="0.7" text-anchor="end">$0</text>
<text transform="translate(2387,646.3) scale(0.86,1)" font-family="Liberation Serif" font-size="38" fill="#f54a40" stroke="#f54a40" stroke-width="0.7" text-anchor="end">$0</text>
<text transform="translate(2387,739.7) scale(0.86,1)" font-family="Liberation Serif" font-size="38" fill="#f54a40" stroke="#f54a40" stroke-width="0.7" text-anchor="end">$0</text>
<text transform="translate(2387,833.0) scale(0.86,1)" font-family="Liberation Serif" font-size="38" fill="#f54a40" stroke="#f54a40" stroke-width="0.7" text-anchor="end">$431, 003</text>
<text transform="translate(2387,926.3) scale(0.86,1)" font-family="Liberation Serif" font-size="38" fill="#f54a40" stroke="#f54a40" stroke-width="0.7" text-anchor="end">$0</text>
<text transform="translate(2387,1019.7) scale(0.86,1)" font-family="Liberation Serif" font-size="38" fill="#f54a40" stroke="#f54a40" stroke-width="0.7" text-anchor="end">$0</text>
<text transform="translate(2387,1113.0) scale(0.86,1)" font-family="Liberation Serif" font-size="38" fill="#f54a40" stroke="#f54a40" stroke-width="0.7" text-anchor="end">$0</text>
<text transform="translate(2387,1206.3) scale(0.86,1)" font-family="Liberation Serif" font-size="38" fill="#f54a40" stroke="#f54a40" stroke-width="0.7" text-anchor="end">$0</text>
<text transform="translate(2387,1299.7) scale(0.86,1)" font-family="Liberation Serif" font-size="38" fill="#f54a40" stroke="#f54a40" stroke-width="0.7" text-anchor="end">$536, 260</text>
<text transform="translate(2387,1393.0) scale(0.86,1)" font-family="Liberation Serif" font-size="38" fill="#f54a40" stroke="#f54a40" stroke-width="0.7" text-anchor="end">$0</text>
<text transform="translate(2387,1486.3) scale(0.86,1)" font-family="Liberation Serif" font-size="38" fill="#f54a40" stroke="#f54a40" stroke-width="0.7" text-anchor="end">$0</text>
<text transform="translate(2387,1626.3) scale(0.86,1)" font-family="Liberation Serif" font-size="38" fill="#f54a40" stroke="#f54a40" stroke-width="0.7" text-anchor="end">$3, 079, 490</text>
<text transform="translate(2387,1719.7) scale(0.86,1)" font-family="Liberation Serif" font-size="38" fill="#f54a40" stroke="#f54a40" stroke-width="0.7" text-anchor="end">$0</text>
<text transform="translate(2387,1813.0) scale(0.86,1)" font-family="Liberation Serif" font-size="38" fill="#f54a40" stroke="#f54a40" stroke-width="0.7" text-anchor="end">$139, 038</text>
<text transform="translate(2387,1906.3) scale(0.86,1)" font-family="Liberation Serif" font-size="38" fill="#f54a40" stroke="#f54a40" stroke-width="0.7" text-anchor="end">$46, 283</text>
<text transform="translate(2387,1953.0) scale(0.86,1)" font-family="Liberation Serif" font-size="38" fill="#f54a40" stroke="#f54a40" stroke-width="0.7" text-anchor="end">$7, 904, 130</text>
<rect x="2411" y="374" width="10.00" height="1619.00" fill="#ffffff" />
<line x1="2413" y1="373.0" x2="2421" y2="373.0" stroke="#d8d8d8" stroke-width="2" />
<line x1="2413" y1="419.66700000000003" x2="2421" y2="419.66700000000003" stroke="#d8d8d8" stroke-width="2" />
<line x1="2413" y1="466.334" x2="2421" y2="466.334" stroke="#d8d8d8" stroke-width="2" />
<line x1="2413" y1="513.001" x2="2421" y2="513.001" stroke="#d8d8d8" stroke-width="2" />
<line x1="2413" y1="559.668" x2="2421" y2="559.668" stroke="#d8d8d8" stroke-width="2" />
<line x1="2413" y1="606.335" x2="2421" y2="606.335" stroke="#d8d8d8" stroke-width="2" />
<line x1="2413" y1="653.002" x2="2421" y2="653.002" stroke="#d8d8d8" stroke-width="2" />
<line x1="2413" y1="699.669" x2="2421" y2="699.669" stroke="#d8d8d8" stroke-width="2" />
<line x1="2413" y1="746.336" x2="2421" y2="746.336" stroke="#d8d8d8" stroke-width="2" />
<line x1="2413" y1="793.003" x2="2421" y2="793.003" stroke="#d8d8d8" stroke-width="2" />
<line x1="2413" y1="839.6700000000001" x2="2421" y2="839.6700000000001" stroke="#d8d8d8" stroke-width="2" />
<line x1="2413" y1="886.337" x2="2421" y2="886.337" stroke="#d8d8d8" stroke-width="2" />
<line x1="2413" y1="933.004" x2="2421" y2="933.004" stroke="#d8d8d8" stroke-width="2" />
<line x1="2413" y1="979.671" x2="2421" y2="979.671" stroke="#d8d8d8" stroke-width="2" />
<line x1="2413" y1="1026.338" x2="2421" y2="1026.338" stroke="#d8d8d8" stroke-width="2" />
<line x1="2413" y1="1073.005" x2="2421" y2="1073.005" stroke="#d8d8d8" stroke-width="2" />
<line x1="2413" y1="1119.672" x2="2421" y2="1119.672" stroke="#d8d8d8" stroke-width="2" />
<line x1="2413" y1="1166.339" x2="2421" y2="1166.339" stroke="#d8d8d8" stroke-width="2" />
<line x1="2413" y1="1213.006" x2="2421" y2="1213.006" stroke="#d8d8d8" stroke-width="2" />
<line x1="2413" y1="1259.673" x2="2421" y2="1259.673" stroke="#d8d8d8" stroke-width="2" />
<line x1="2413" y1="1306.3400000000001" x2="2421" y2="1306.3400000000001" stroke="#d8d8d8" stroke-width="2" />
<line x1="2413" y1="1353.007" x2="2421" y2="1353.007" stroke="#d8d8d8" stroke-width="2" />
<line x1="2413" y1="1399.674" x2="2421" y2="1399.674" stroke="#d8d8d8" stroke-width="2" />
<line x1="2413" y1="1446.3410000000001" x2="2421" y2="1446.3410000000001" stroke="#d8d8d8" stroke-width="2" />
<line x1="2413" y1="1493.008" x2="2421" y2="1493.008" stroke="#d8d8d8" stroke-width="2" />
<line x1="2413" y1="1539.675" x2="2421" y2="1539.675" stroke="#d8d8d8" stroke-width="2" />
<line x1="2413" y1="1586.342" x2="2421" y2="1586.342" stroke="#d8d8d8" stroke-width="2" />
<line x1="2413" y1="1633.009" x2="2421" y2="1633.009" stroke="#d8d8d8" stroke-width="2" />
<line x1="2413" y1="1679.676" x2="2421" y2="1679.676" stroke="#d8d8d8" stroke-width="2" />
<line x1="2413" y1="1726.343" x2="2421" y2="1726.343" stroke="#d8d8d8" stroke-width="2" />
<line x1="2413" y1="1773.01" x2="2421" y2="1773.01" stroke="#d8d8d8" stroke-width="2" />
<line x1="2413" y1="1819.6770000000001" x2="2421" y2="1819.6770000000001" stroke="#d8d8d8" stroke-width="2" />
<line x1="2413" y1="1866.344" x2="2421" y2="1866.344" stroke="#d8d8d8" stroke-width="2" />
<line x1="2413" y1="1913.011" x2="2421" y2="1913.011" stroke="#d8d8d8" stroke-width="2" />
<line x1="2413" y1="1959.678" x2="2421" y2="1959.678" stroke="#d8d8d8" stroke-width="2" />
<rect x="2408" y="374" width="4.00" height="1539.00" fill="#222" />
<rect x="895" y="1866.344" width="1242.00" height="46.67" fill="#fff2cc" />
<rect x="895" y="1913.011" width="1242.00" height="46.67" fill="#ffffff" />
<line x1="980" y1="1913.011" x2="980" y2="1959.6779999999999" stroke="#d9d9d9" stroke-width="2" />
<line x1="1129" y1="1913.011" x2="1129" y2="1959.6779999999999" stroke="#d9d9d9" stroke-width="2" />
<line x1="1276" y1="1913.011" x2="1276" y2="1959.6779999999999" stroke="#d9d9d9" stroke-width="2" />
<line x1="1425" y1="1913.011" x2="1425" y2="1959.6779999999999" stroke="#d9d9d9" stroke-width="2" />
<line x1="1591" y1="1913.011" x2="1591" y2="1959.6779999999999" stroke="#d9d9d9" stroke-width="2" />
<line x1="1735" y1="1913.011" x2="1735" y2="1959.6779999999999" stroke="#d9d9d9" stroke-width="2" />
<line x1="1924" y1="1913.011" x2="1924" y2="1959.6779999999999" stroke="#d9d9d9" stroke-width="2" />
<rect x="895" y="1959.678" width="1242.00" height="33.32" fill="#ffffff" />
<line x1="980" y1="1959.678" x2="980" y2="1993" stroke="#d9d9d9" stroke-width="2" />
<line x1="1129" y1="1959.678" x2="1129" y2="1993" stroke="#d9d9d9" stroke-width="2" />
<line x1="1276" y1="1959.678" x2="1276" y2="1993" stroke="#d9d9d9" stroke-width="2" />
<line x1="1425" y1="1959.678" x2="1425" y2="1993" stroke="#d9d9d9" stroke-width="2" />
<line x1="1591" y1="1959.678" x2="1591" y2="1993" stroke="#d9d9d9" stroke-width="2" />
<line x1="1735" y1="1959.678" x2="1735" y2="1993" stroke="#d9d9d9" stroke-width="2" />
<line x1="1924" y1="1959.678" x2="1924" y2="1993" stroke="#d9d9d9" stroke-width="2" />
<line x1="895" y1="1962" x2="2421" y2="1962" stroke="#d9d9d9" stroke-width="2" />
<rect x="1922" y="1873" width="4.00" height="42.00" fill="#222" />
<rect x="2132" y="1868" width="4.00" height="45.00" fill="#222" />
<rect x="2135" y="1914.5" width="274.00" height="46.50" fill="none" stroke="#217346" stroke-width="3.5" />
<rect x="2404" y="1955" width="10.00" height="10.00" fill="#217346" />
<rect x="895" y="1993" width="1526.00" height="58.00" fill="#e6e6e6" />
<line x1="895" y1="1994" x2="2421" y2="1994" stroke="#c6c6c6" stroke-width="2" />
<rect x="891" y="1997" width="97.00" height="46.00" fill="#fbfbfb" />
<rect x="899" y="2040" width="89.00" height="6.00" fill="#1e8a55" />
<text x="891" y="2028" font-family="Liberation Sans" font-size="24.5" fill="#333" text-anchor="start" >Budget</text>
<rect x="990" y="1997" width="100.00" height="46.00" fill="#f5f6f7" />
<text x="995" y="2028" font-family="Liberation Sans" font-size="24.5" fill="#333" text-anchor="start" >duration</text>
<line x1="1093" y1="2000" x2="1093" y2="2043" stroke="#aaa" stroke-width="2" />
<circle cx="1180.6" cy="2022.4" r="16" fill="none" stroke="#999" stroke-width="2.5"/>
<path d="M1172,2022.4 L1189,2022.4 M1180.6,2014 L1180.6,2031" fill="none" stroke="#888" stroke-width="3" />
<rect x="895" y="2050" width="1526.00" height="2.00" fill="#d2d2d2" />
<rect x="895" y="2052" width="1526.00" height="46.00" fill="#f1f1f1" />
<rect x="898" y="2098.5" width="1523.00" height="83.50" fill="#08323f" />
<rect x="405" y="232" width="1731.00" height="1636.00" fill="#eceef2" stroke="#c3c7ce" stroke-width="2" />
<rect x="406" y="234" width="1729.00" height="57.00" fill="url(#titleg)" />
<rect x="406" y="288" width="1729.00" height="5.00" fill="#c5c9cf" />
<rect x="414" y="293" width="1713.00" height="1569.00" fill="#f0f0f0" />
<rect x="403" y="293" width="14.00" height="1575.00" fill="#c5cad4" />
<rect x="408" y="293" width="3.00" height="1575.00" fill="#d2d6dd" />
<rect x="2127" y="293" width="9.00" height="1575.00" fill="#d3d7de" />
<rect x="405" y="1862" width="1731.00" height="6.00" fill="#c3c8d0" />
<rect x="421" y="252" width="34.00" height="24.00" fill="#7a7a7a" opacity="0.75"/>
<rect x="424" y="262" width="4.00" height="12.00" fill="#f3f3f3" />
<rect x="431" y="255" width="4.00" height="19.00" fill="#f3f3f3" />
<rect x="438" y="258" width="4.00" height="16.00" fill="#f3f3f3" />
<rect x="445" y="262" width="4.00" height="12.00" fill="#f3f3f3" />
<text x="465" y="274" font-family="Liberation Sans" font-size="28.8" fill="#aab4c4" font-weight="bold" text-anchor="start" >@RISK - Output: N286</text>
<rect x="1924" y="245" width="62.00" height="33.00" fill="#e3e6eb" stroke="#c0c4cb" stroke-width="2" rx="5" />
<rect x="1992" y="245" width="63.00" height="33.00" fill="#e3e6eb" stroke="#c0c4cb" stroke-width="2" rx="5" />
<rect x="2061" y="245" width="63.00" height="33.00" fill="#e3e6eb" stroke="#c0c4cb" stroke-width="2" rx="5" />
<rect x="1946" y="264.5" width="19.50" height="4.00" fill="#72767e" />
<rect x="2015.5" y="256.5" width="17.00" height="11.00" fill="none" stroke="#72767e" stroke-width="4" />
<path d="M2085,256 L2101,269 M2101,256 L2085,269" fill="none" stroke="#72767e" stroke-width="4.5" />
<rect x="429" y="302" width="1157.00" height="1477.00" fill="#ffffff" />
<rect x="514" y="444" width="1056.00" height="1201.00" fill="#f3f3f3" />
<rect x="514" y="998" width="263.00" height="93.00" fill="#f9f9f9" />
<rect x="1230" y="998" width="340.00" height="93.00" fill="#f9f9f9" />
<line x1="631.1" y1="444" x2="631.1" y2="1645" stroke="#e0e0e0" stroke-width="2" />
<line x1="748.2" y1="444" x2="748.2" y2="1645" stroke="#e0e0e0" stroke-width="2" />
<line x1="865.3" y1="444" x2="865.3" y2="1645" stroke="#e0e0e0" stroke-width="2" />
<line x1="982.4" y1="444" x2="982.4" y2="1645" stroke="#e0e0e0" stroke-width="2" />
<line x1="1099.5" y1="444" x2="1099.5" y2="1645" stroke="#e0e0e0" stroke-width="2" />
<line x1="1216.6" y1="444" x2="1216.6" y2="1645" stroke="#e0e0e0" stroke-width="2" />
<line x1="1333.6999999999998" y1="444" x2="1333.6999999999998" y2="1645" stroke="#e0e0e0" stroke-width="2" />
<line x1="1450.8" y1="444" x2="1450.8" y2="1645" stroke="#e0e0e0" stroke-width="2" />
<line x1="1567.8999999999999" y1="444" x2="1567.8999999999999" y2="1645" stroke="#e0e0e0" stroke-width="2" />
<line x1="514" y1="1474.2" x2="1570" y2="1474.2" stroke="#e0e0e0" stroke-width="2" />
<line x1="514" y1="1303.4" x2="1570" y2="1303.4" stroke="#e0e0e0" stroke-width="2" />
<line x1="514" y1="1132.6" x2="1570" y2="1132.6" stroke="#e0e0e0" stroke-width="2" />
<line x1="514" y1="961.8" x2="1570" y2="961.8" stroke="#e0e0e0" stroke-width="2" />
<line x1="514" y1="791.0" x2="1570" y2="791.0" stroke="#e0e0e0" stroke-width="2" />
<line x1="514" y1="620.1999999999998" x2="1570" y2="620.1999999999998" stroke="#e0e0e0" stroke-width="2" />
<text x="1041" y="359" font-family="Liberation Sans" font-size="38" fill="#8a8a8a" stroke="#8a8a8a" stroke-width="0.8" text-anchor="middle" >總曝險值</text>
<line x1="777" y1="443" x2="777" y2="1645" stroke="#555" stroke-width="2.5" />
<rect x="752" y="1373" width="24.00" height="272.00" fill="url(#hatch)" stroke="#ee6a86" stroke-width="1.2" />
<rect x="776" y="1272.5" width="24.00" height="372.50" fill="url(#barg)" stroke="#ee6a86" stroke-width="1.2" />
<rect x="800" y="1203.5" width="23.00" height="441.50" fill="url(#barg)" stroke="#ee6a86" stroke-width="1.2" />
<rect x="823" y="1061.5" width="23.00" height="583.50" fill="url(#barg)" stroke="#ee6a86" stroke-width="1.2" />
<rect x="846" y="953" width="23.00" height="692.00" fill="url(#barg)" stroke="#ee6a86" stroke-width="1.2" />
<rect x="869" y="828" width="24.00" height="817.00" fill="url(#barg)" stroke="#ee6a86" stroke-width="1.2" />
<rect x="893" y="813" width="24.00" height="832.00" fill="url(#barg)" stroke="#ee6a86" stroke-width="1.2" />
<rect x="917" y="605" width="25.00" height="1040.00" fill="url(#barg)" stroke="#ee6a86" stroke-width="1.2" />
<rect x="942" y="583" width="24.00" height="1062.00" fill="url(#barg)" stroke="#ee6a86" stroke-width="1.2" />
<rect x="966" y="538" width="21.00" height="1107.00" fill="url(#barg)" stroke="#ee6a86" stroke-width="1.2" />
<rect x="987" y="517" width="36.00" height="1128.00" fill="url(#barg)" stroke="#ee6a86" stroke-width="1.2" />
<rect x="1016" y="592" width="20.00" height="1053.00" fill="url(#barg)" stroke="#ee6a86" stroke-width="1.2" />
<rect x="1036" y="527" width="28.00" height="1118.00" fill="url(#barg)" stroke="#ee6a86" stroke-width="1.2" />
<rect x="1059" y="588" width="30.00" height="1057.00" fill="url(#barg)" stroke="#ee6a86" stroke-width="1.2" />
<rect x="1089" y="715" width="26.00" height="930.00" fill="url(#barg)" stroke="#ee6a86" stroke-width="1.2" />
<rect x="1115" y="875" width="30.00" height="770.00" fill="url(#barg)" stroke="#ee6a86" stroke-width="1.2" />
<rect x="1140" y="1000" width="20.00" height="645.00" fill="url(#barg)" stroke="#ee6a86" stroke-width="1.2" />
<rect x="1160" y="1136" width="22.00" height="509.00" fill="url(#barg2)" stroke="#ee6a86" stroke-width="1.2" />
<rect x="1182" y="1152" width="25.00" height="493.00" fill="url(#barg2)" stroke="#ee6a86" stroke-width="1.2" />
<rect x="1207" y="1298" width="23.00" height="347.00" fill="url(#barg2)" stroke="#ee6a86" stroke-width="1.2" />
<rect x="1230" y="1347" width="23.00" height="298.00" fill="url(#hatch)" stroke="#ee6a86" stroke-width="1.2" />
<rect x="1253" y="1473" width="24.00" height="172.00" fill="url(#hatch)" stroke="#ee6a86" stroke-width="1.2" />
<rect x="1277" y="1510" width="24.00" height="135.00" fill="url(#hatch)" stroke="#ee6a86" stroke-width="1.2" />
<rect x="1301" y="1574" width="24.00" height="71.00" fill="url(#hatch)" stroke="#ee6a86" stroke-width="1.2" />
<rect x="1325" y="1585" width="24.00" height="60.00" fill="url(#hatch)" stroke="#ee6a86" stroke-width="1.2" />
<rect x="1349" y="1604" width="25.00" height="41.00" fill="url(#hatch)" stroke="#ee6a86" stroke-width="1.2" />
<rect x="1374" y="1624" width="23.00" height="21.00" fill="url(#hatch)" stroke="#ee6a86" stroke-width="1.2" />
<rect x="1397" y="1636" width="23.00" height="9.00" fill="url(#hatch)" stroke="#ee6a86" stroke-width="1.2" />
<rect x="1420" y="1632" width="24.00" height="13.00" fill="url(#hatch)" stroke="#ee6a86" stroke-width="1.2" />
<rect x="1444" y="1643" width="26.00" height="2.00" fill="url(#hatch)" stroke="#ee6a86" stroke-width="1.2" />
<line x1="1230" y1="443" x2="1230" y2="1645" stroke="#555" stroke-width="2.5" />
<line x1="514" y1="449" x2="514" y2="1648" stroke="#666" stroke-width="3" />
<line x1="505" y1="1645.0" x2="514" y2="1645.0" stroke="#555" stroke-width="3" />
<line x1="505" y1="1474.2" x2="514" y2="1474.2" stroke="#555" stroke-width="3" />
<line x1="505" y1="1303.4" x2="514" y2="1303.4" stroke="#555" stroke-width="3" />
<line x1="505" y1="1132.6" x2="514" y2="1132.6" stroke="#555" stroke-width="3" />
<line x1="505" y1="961.8" x2="514" y2="961.8" stroke="#555" stroke-width="3" />
<line x1="505" y1="791.0" x2="514" y2="791.0" stroke="#555" stroke-width="3" />
<line x1="505" y1="620.1999999999998" x2="514" y2="620.1999999999998" stroke="#555" stroke-width="3" />
<line x1="505" y1="449.39999999999986" x2="514" y2="449.39999999999986" stroke="#555" stroke-width="3" />
<text x="491" y="458.39999999999986" font-family="Liberation Sans" font-size="25" fill="#3a3a3a" stroke="#3a3a3a" stroke-width="0.9" text-anchor="middle" >7</text>
<text x="491" y="629.1999999999998" font-family="Liberation Sans" font-size="25" fill="#3a3a3a" stroke="#3a3a3a" stroke-width="0.9" text-anchor="middle" >6</text>
<text x="491" y="800.0" font-family="Liberation Sans" font-size="25" fill="#3a3a3a" stroke="#3a3a3a" stroke-width="0.9" text-anchor="middle" >5</text>
<text x="491" y="970.8" font-family="Liberation Sans" font-size="25" fill="#3a3a3a" stroke="#3a3a3a" stroke-width="0.9" text-anchor="middle" >4</text>
<text x="491" y="1141.6" font-family="Liberation Sans" font-size="25" fill="#3a3a3a" stroke="#3a3a3a" stroke-width="0.9" text-anchor="middle" >3</text>
<text x="491" y="1312.4" font-family="Liberation Sans" font-size="25" fill="#3a3a3a" stroke="#3a3a3a" stroke-width="0.9" text-anchor="middle" >2</text>
<line x1="514" y1="1646.5" x2="1570" y2="1646.5" stroke="#444" stroke-width="3" />
<line x1="514.0" y1="1645" x2="514.0" y2="1656" stroke="#444" stroke-width="3" />
<line x1="631.1" y1="1645" x2="631.1" y2="1656" stroke="#444" stroke-width="3" />
<line x1="748.2" y1="1645" x2="748.2" y2="1656" stroke="#444" stroke-width="3" />
<line x1="865.3" y1="1645" x2="865.3" y2="1656" stroke="#444" stroke-width="3" />
<line x1="982.4" y1="1645" x2="982.4" y2="1656" stroke="#444" stroke-width="3" />
<line x1="1099.5" y1="1645" x2="1099.5" y2="1656" stroke="#444" stroke-width="3" />
<line x1="1216.6" y1="1645" x2="1216.6" y2="1656" stroke="#444" stroke-width="3" />
<line x1="1333.6999999999998" y1="1645" x2="1333.6999999999998" y2="1656" stroke="#444" stroke-width="3" />
<line x1="1450.8" y1="1645" x2="1450.8" y2="1656" stroke="#444" stroke-width="3" />
<line x1="1567.8999999999999" y1="1645" x2="1567.8999999999999" y2="1656" stroke="#444" stroke-width="3" />
<text transform="translate(990.9,1669) rotate(-90)" font-family="Liberation Sans" font-size="24" font-weight="bold" fill="#444" text-anchor="end">8.50</text>
<text transform="translate(1108.0,1669) rotate(-90)" font-family="Liberation Sans" font-size="24" font-weight="bold" fill="#444" text-anchor="end">9.00</text>
<text transform="translate(1225.1,1669) rotate(-90)" font-family="Liberation Sans" font-size="24" font-weight="bold" fill="#444" text-anchor="end">9.50</text>
<text transform="translate(1342.1999999999998,1669) rotate(-90)" font-family="Liberation Sans" font-size="24" font-weight="bold" fill="#444" text-anchor="end">10.00</text>
<text transform="translate(1459.3,1669) rotate(-90)" font-family="Liberation Sans" font-size="24" font-weight="bold" fill="#444" text-anchor="end">10.50</text>
<text transform="translate(1576.3999999999999,1669) rotate(-90)" font-family="Liberation Sans" font-size="24" font-weight="bold" fill="#444" text-anchor="end">11.00</text>
<text x="914" y="1757" font-family="Liberation Sans" font-size="24" fill="#333" stroke="#333" stroke-width="0.6" text-anchor="start" >Values in Millions (NT$)</text>
<text transform="translate(474,1053) rotate(-90)" font-family="Liberation Sans" font-size="24.2" font-weight="bold" fill="#444" text-anchor="middle">Values x 10^-7</text>
<rect x="514" y="409" width="1056.00" height="34.00" fill="#ffffff" stroke="#555" stroke-width="3" />
<rect x="777" y="410.5" width="453.00" height="31.00" fill="#f5073a" />
<text x="645.5" y="435" font-family="Liberation Sans" font-size="23" fill="#555" font-weight="bold" text-anchor="middle" >5.0%</text>
<text x="1003.5" y="435" font-family="Liberation Sans" font-size="23" fill="#fff0f0" font-weight="bold" text-anchor="middle" >90.0%</text>
<text x="1400" y="435" font-family="Liberation Sans" font-size="23" fill="#555" font-weight="bold" text-anchor="middle" >5.0%</text>
<path d="M767,402 L787,402 L787,406 L777,420 L767,406 Z" fill="#222" />
<text x="777" y="393" font-family="Liberation Sans" font-size="23.5" fill="#333" font-weight="bold" text-anchor="middle" >7.613</text>
<path d="M1220,402 L1240,402 L1240,406 L1230,420 L1220,406 Z" fill="#222" />
<text x="1230" y="393" font-family="Liberation Sans" font-size="23.5" fill="#333" font-weight="bold" text-anchor="middle" >9.557</text>
<rect x="1598" y="304" width="516.00" height="1476.00" fill="#f6f7f9" stroke="#b8bcc4" stroke-width="2.5" />
<rect x="1599.5" y="305.5" width="513.00" height="41.50" fill="#e3e3e3" />
<rect x="1599.5" y="347" width="513.00" height="5.00" fill="#bfc3c9" />
<text x="1606" y="337" font-family="Liberation Sans" font-size="26.3" fill="#1e1e1e" font-weight="bold" text-anchor="start" >Statistics</text>
<path d="M2086,321 L2095,330 L2104,321" fill="none" stroke="#777" stroke-width="2.5" />
<rect x="1599.5" y="352" width="139.50" height="43.00" fill="#eff0f3" />
<rect x="1740" y="350" width="338.00" height="46.00" fill="#f20a37" />
<text x="2068" y="382" font-family="Liberation Sans" font-size="26" fill="#ffffff" font-weight="bold" text-anchor="end" >總曝險值</text>
<rect x="2078" y="352" width="34.50" height="43.00" fill="#eff0f3" />
<rect x="1599.5" y="394" width="513.00" height="3.00" fill="#c7cbd1" />
<rect x="1599.5" y="397" width="139.50" height="42.00" fill="#f5f3dc" />
<rect x="1741" y="397" width="337.00" height="42.00" fill="#ffffff" />
<rect x="1599.5" y="436" width="478.50" height="3.00" fill="#e1e3e7" />
<text x="1608" y="427" font-family="Liberation Sans" font-size="26" fill="#3a3a3a" stroke="#3a3a3a" stroke-width="0.7" text-anchor="start" >Cell</text>
<text x="2068.5" y="427" font-family="Liberation Sans" font-size="28.1" fill="#3a3a40" stroke="#3a3a40" stroke-width="0.6" text-anchor="end" >預算!N286</text>
<rect x="1599.5" y="439" width="139.50" height="42.00" fill="#f5f3dc" />
<rect x="1741" y="439" width="337.00" height="42.00" fill="#ffffff" />
<rect x="1599.5" y="478" width="478.50" height="3.00" fill="#e1e3e7" />
<text x="1608" y="469" font-family="Liberation Sans" font-size="26" fill="#3a3a3a" stroke="#3a3a3a" stroke-width="0.7" text-anchor="start" >Minimum</text>
<text x="2068.5" y="469" font-family="Liberation Sans" font-size="28.1" fill="#3a3a40" stroke="#3a3a40" stroke-width="0.6" text-anchor="end" >NT$6,692,010.08</text>
<rect x="1599.5" y="481" width="139.50" height="42.00" fill="#f5f3dc" />
<rect x="1741" y="481" width="337.00" height="42.00" fill="#ffffff" />
<rect x="1599.5" y="520" width="478.50" height="3.00" fill="#e1e3e7" />
<text x="1608" y="511" font-family="Liberation Sans" font-size="26" fill="#3a3a3a" stroke="#3a3a3a" stroke-width="0.7" text-anchor="start" >Maximum</text>
<text x="2068.5" y="511" font-family="Liberation Sans" font-size="28.1" fill="#3a3a40" stroke="#3a3a40" stroke-width="0.6" text-anchor="end" >NT$10,583,159.99</text>
<rect x="1599.5" y="523" width="139.50" height="42.00" fill="#f5f3dc" />
<rect x="1741" y="523" width="337.00" height="42.00" fill="#ffffff" />
<rect x="1599.5" y="562" width="478.50" height="3.00" fill="#e1e3e7" />
<text x="1608" y="553" font-family="Liberation Sans" font-size="26" fill="#3a3a3a" stroke="#3a3a3a" stroke-width="0.7" text-anchor="start" >Mean</text>
<text x="2068.5" y="553" font-family="Liberation Sans" font-size="28.1" fill="#3a3a40" stroke="#3a3a40" stroke-width="0.6" text-anchor="end" >NT$8,586,347.22</text>
<rect x="1599.5" y="565" width="139.50" height="42.00" fill="#f5f3dc" />
<rect x="1741" y="565" width="337.00" height="42.00" fill="#ffffff" />
<rect x="1599.5" y="604" width="478.50" height="3.00" fill="#e1e3e7" />
<text x="1628" y="595" font-family="Liberation Sans" font-size="26" fill="#3a3a3a" stroke="#3a3a3a" stroke-width="0.7" text-anchor="start" >90% CI</text>
<text x="2063" y="595" font-family="Liberation Sans" font-size="28.1" fill="#3a3a40" stroke="#3a3a40" stroke-width="0.6" text-anchor="end" >± NT$10,953.31</text>
<rect x="1599.5" y="607" width="139.50" height="42.00" fill="#f5f3dc" />
<rect x="1741" y="607" width="337.00" height="42.00" fill="#ffffff" />
<rect x="1599.5" y="646" width="478.50" height="3.00" fill="#e1e3e7" />
<text x="1608" y="637" font-family="Liberation Sans" font-size="26" fill="#3a3a3a" stroke="#3a3a3a" stroke-width="0.7" text-anchor="start" >Mode</text>
<text x="2068.5" y="637" font-family="Liberation Sans" font-size="28.1" fill="#3a3a40" stroke="#3a3a40" stroke-width="0.6" text-anchor="end" >NT$8,377,873.99</text>
<rect x="1599.5" y="649" width="139.50" height="42.00" fill="#f5f3dc" />
<rect x="1741" y="649" width="337.00" height="42.00" fill="#ffffff" />
<rect x="1599.5" y="688" width="478.50" height="3.00" fill="#e1e3e7" />
<text x="1608" y="679" font-family="Liberation Sans" font-size="26" fill="#3a3a3a" stroke="#3a3a3a" stroke-width="0.7" text-anchor="start" >Median</text>
<text x="2068.5" y="679" font-family="Liberation Sans" font-size="28.1" fill="#3a3a40" stroke="#3a3a40" stroke-width="0.6" text-anchor="end" >NT$8,587,195.29</text>
<rect x="1599.5" y="691" width="139.50" height="42.00" fill="#f5f3dc" />
<rect x="1741" y="691" width="337.00" height="42.00" fill="#ffffff" />
<rect x="1599.5" y="730" width="478.50" height="3.00" fill="#e1e3e7" />
<text x="1608" y="721" font-family="Liberation Sans" font-size="26" fill="#3a3a3a" stroke="#3a3a3a" stroke-width="0.7" text-anchor="start" >Std Dev</text>
<text x="2068.5" y="721" font-family="Liberation Sans" font-size="28.1" fill="#3a3a40" stroke="#3a3a40" stroke-width="0.6" text-anchor="end" >NT$588,200.06</text>
<rect x="1599.5" y="733" width="139.50" height="42.00" fill="#f5f3dc" />
<rect x="1741" y="733" width="337.00" height="42.00" fill="#ffffff" />
<rect x="1599.5" y="772" width="478.50" height="3.00" fill="#e1e3e7" />
<text x="1608" y="763" font-family="Liberation Sans" font-size="26" fill="#3a3a3a" stroke="#3a3a3a" stroke-width="0.7" text-anchor="start" >Skewness</text>
<text x="2068.5" y="763" font-family="Liberation Sans" font-size="28.1" fill="#3a3a40" stroke="#3a3a40" stroke-width="0.6" text-anchor="end" >0.0196</text>
<rect x="1599.5" y="775" width="139.50" height="42.00" fill="#f5f3dc" />
<rect x="1741" y="775" width="337.00" height="42.00" fill="#ffffff" />
<rect x="1599.5" y="814" width="478.50" height="3.00" fill="#e1e3e7" />
<text x="1608" y="805" font-family="Liberation Sans" font-size="26" fill="#3a3a3a" stroke="#3a3a3a" stroke-width="0.7" text-anchor="start" >Kurtosis</text>
<text x="2068.5" y="805" font-family="Liberation Sans" font-size="28.1" fill="#3a3a40" stroke="#3a3a40" stroke-width="0.6" text-anchor="end" >2.7662</text>
<rect x="1599.5" y="817" width="139.50" height="42.00" fill="#f5f3dc" />
<rect x="1741" y="817" width="337.00" height="42.00" fill="#ffffff" />
<rect x="1599.5" y="856" width="478.50" height="3.00" fill="#e1e3e7" />
<text x="1608" y="847" font-family="Liberation Sans" font-size="26" fill="#3a3a3a" stroke="#3a3a3a" stroke-width="0.7" text-anchor="start" >Values</text>
<text x="2068.5" y="847" font-family="Liberation Sans" font-size="28.1" fill="#3a3a40" stroke="#3a3a40" stroke-width="0.6" text-anchor="end" >7804</text>
<rect x="1599.5" y="859" width="139.50" height="42.00" fill="#f5f3dc" />
<rect x="1741" y="859" width="337.00" height="42.00" fill="#ffffff" />
<rect x="1599.5" y="898" width="478.50" height="3.00" fill="#e1e3e7" />
<text x="1608" y="889" font-family="Liberation Sans" font-size="26" fill="#3a3a3a" stroke="#3a3a3a" stroke-width="0.7" text-anchor="start" >Errors</text>
<text x="2068.5" y="889" font-family="Liberation Sans" font-size="28.1" fill="#3a3a40" stroke="#3a3a40" stroke-width="0.6" text-anchor="end" >0</text>
<rect x="1599.5" y="901" width="139.50" height="42.00" fill="#f5f3dc" />
<rect x="1741" y="901" width="337.00" height="42.00" fill="#ffffff" />
<rect x="1599.5" y="940" width="478.50" height="3.00" fill="#e1e3e7" />
<text x="1608" y="931" font-family="Liberation Sans" font-size="26" fill="#3a3a3a" stroke="#3a3a3a" stroke-width="0.7" text-anchor="start" >Filtered</text>
<text x="2068.5" y="931" font-family="Liberation Sans" font-size="28.1" fill="#3a3a40" stroke="#3a3a40" stroke-width="0.6" text-anchor="end" >0</text>
<rect x="1599.5" y="943" width="139.50" height="42.00" fill="#f5f3dc" />
<rect x="1741" y="943" width="337.00" height="42.00" fill="#ffffff" />
<rect x="1599.5" y="982" width="478.50" height="3.00" fill="#e1e3e7" />
<text x="1608" y="973" font-family="Liberation Sans" font-size="26" fill="#3a3a3a" stroke="#3a3a3a" stroke-width="0.7" text-anchor="start" >Left X</text>
<text x="2068.5" y="973" font-family="Liberation Sans" font-size="28.1" fill="#3a3a40" stroke="#3a3a40" stroke-width="0.6" text-anchor="end" >NT$7,612,635.83</text>
<rect x="1599.5" y="985" width="139.50" height="42.00" fill="#f5f3dc" />
<rect x="1741" y="985" width="337.00" height="42.00" fill="#ffffff" />
<rect x="1599.5" y="1024" width="478.50" height="3.00" fill="#e1e3e7" />
<text x="1608" y="1015" font-family="Liberation Sans" font-size="26" fill="#3a3a3a" stroke="#3a3a3a" stroke-width="0.7" text-anchor="start" >Left P</text>
<text x="2068.5" y="1015" font-family="Liberation Sans" font-size="28.1" fill="#3a3a40" stroke="#3a3a40" stroke-width="0.6" text-anchor="end" >5.0%</text>
<rect x="1599.5" y="1027" width="139.50" height="42.00" fill="#f5f3dc" />
<rect x="1741" y="1027" width="337.00" height="42.00" fill="#ffffff" />
<rect x="1599.5" y="1066" width="478.50" height="3.00" fill="#e1e3e7" />
<text x="1608" y="1057" font-family="Liberation Sans" font-size="26" fill="#3a3a3a" stroke="#3a3a3a" stroke-width="0.7" text-anchor="start" >Right X</text>
<text x="2068.5" y="1057" font-family="Liberation Sans" font-size="28.1" fill="#3a3a40" stroke="#3a3a40" stroke-width="0.6" text-anchor="end" >NT$9,556,963.50</text>
<rect x="1599.5" y="1069" width="139.50" height="42.00" fill="#f5f3dc" />
<rect x="1741" y="1069" width="337.00" height="42.00" fill="#ffffff" />
<rect x="1599.5" y="1108" width="478.50" height="3.00" fill="#e1e3e7" />
<text x="1608" y="1099" font-family="Liberation Sans" font-size="26" fill="#3a3a3a" stroke="#3a3a3a" stroke-width="0.7" text-anchor="start" >Right P</text>
<text x="2068.5" y="1099" font-family="Liberation Sans" font-size="28.1" fill="#3a3a40" stroke="#3a3a40" stroke-width="0.6" text-anchor="end" >95.0%</text>
<rect x="1599.5" y="1111" width="139.50" height="42.00" fill="#f5f3dc" />
<rect x="1741" y="1111" width="337.00" height="42.00" fill="#ffffff" />
<rect x="1599.5" y="1150" width="478.50" height="3.00" fill="#e1e3e7" />
<text x="1608" y="1141" font-family="Liberation Sans" font-size="26" fill="#3a3a3a" stroke="#3a3a3a" stroke-width="0.7" text-anchor="start" >Dif. X</text>
<text x="2068.5" y="1141" font-family="Liberation Sans" font-size="28.1" fill="#3a3a40" stroke="#3a3a40" stroke-width="0.6" text-anchor="end" >NT$1,944,327.67</text>
<rect x="1599.5" y="1153" width="139.50" height="42.00" fill="#f5f3dc" />
<rect x="1741" y="1153" width="337.00" height="42.00" fill="#ffffff" />
<rect x="1599.5" y="1192" width="478.50" height="3.00" fill="#e1e3e7" />
<text x="1608" y="1183" font-family="Liberation Sans" font-size="26" fill="#3a3a3a" stroke="#3a3a3a" stroke-width="0.7" text-anchor="start" >Dif. P</text>
<text x="2068.5" y="1183" font-family="Liberation Sans" font-size="28.1" fill="#3a3a40" stroke="#3a3a40" stroke-width="0.6" text-anchor="end" >90.0%</text>
<rect x="1599.5" y="1195" width="139.50" height="42.00" fill="#f5f3dc" />
<rect x="1741" y="1195" width="337.00" height="42.00" fill="#ffffff" />
<rect x="1599.5" y="1234" width="478.50" height="3.00" fill="#e1e3e7" />
<text x="1608" y="1225" font-family="Liberation Sans" font-size="26" fill="#3a3a3a" stroke="#3a3a3a" stroke-width="0.7" text-anchor="start" >1%</text>
<text x="2068.5" y="1225" font-family="Liberation Sans" font-size="28.1" fill="#3a3a40" stroke="#3a3a40" stroke-width="0.6" text-anchor="end" >NT$7,269,699.01</text>
<rect x="1599.5" y="1237" width="139.50" height="42.00" fill="#f5f3dc" />
<rect x="1741" y="1237" width="337.00" height="42.00" fill="#ffffff" />
<rect x="1599.5" y="1276" width="478.50" height="3.00" fill="#e1e3e7" />
<text x="1608" y="1267" font-family="Liberation Sans" font-size="26" fill="#3a3a3a" stroke="#3a3a3a" stroke-width="0.7" text-anchor="start" >2.5%</text>
<text x="2068.5" y="1267" font-family="Liberation Sans" font-size="28.1" fill="#3a3a40" stroke="#3a3a40" stroke-width="0.6" text-anchor="end" >NT$7,452,073.26</text>
<rect x="1599.5" y="1279" width="139.50" height="42.00" fill="#f5f3dc" />
<rect x="1741" y="1279" width="337.00" height="42.00" fill="#ffffff" />
<rect x="1599.5" y="1318" width="478.50" height="3.00" fill="#e1e3e7" />
<text x="1608" y="1309" font-family="Liberation Sans" font-size="26" fill="#3a3a3a" stroke="#3a3a3a" stroke-width="0.7" text-anchor="start" >5%</text>
<text x="2068.5" y="1309" font-family="Liberation Sans" font-size="28.1" fill="#3a3a40" stroke="#3a3a40" stroke-width="0.6" text-anchor="end" >NT$7,612,635.83</text>
<rect x="1599.5" y="1321" width="139.50" height="42.00" fill="#f5f3dc" />
<rect x="1741" y="1321" width="337.00" height="42.00" fill="#ffffff" />
<rect x="1599.5" y="1360" width="478.50" height="3.00" fill="#e1e3e7" />
<text x="1608" y="1351" font-family="Liberation Sans" font-size="26" fill="#3a3a3a" stroke="#3a3a3a" stroke-width="0.7" text-anchor="start" >10%</text>
<text x="2068.5" y="1351" font-family="Liberation Sans" font-size="28.1" fill="#3a3a40" stroke="#3a3a40" stroke-width="0.6" text-anchor="end" >NT$7,822,384.52</text>
<rect x="1599.5" y="1363" width="139.50" height="42.00" fill="#f5f3dc" />
<rect x="1741" y="1363" width="337.00" height="42.00" fill="#ffffff" />
<rect x="1599.5" y="1402" width="478.50" height="3.00" fill="#e1e3e7" />
<text x="1608" y="1393" font-family="Liberation Sans" font-size="26" fill="#3a3a3a" stroke="#3a3a3a" stroke-width="0.7" text-anchor="start" >20%</text>
<text x="2068.5" y="1393" font-family="Liberation Sans" font-size="28.1" fill="#3a3a40" stroke="#3a3a40" stroke-width="0.6" text-anchor="end" >NT$8,075,133.17</text>
<rect x="1599.5" y="1405" width="139.50" height="42.00" fill="#f5f3dc" />
<rect x="1741" y="1405" width="337.00" height="42.00" fill="#ffffff" />
<rect x="1599.5" y="1444" width="478.50" height="3.00" fill="#e1e3e7" />
<text x="1608" y="1435" font-family="Liberation Sans" font-size="26" fill="#3a3a3a" stroke="#3a3a3a" stroke-width="0.7" text-anchor="start" >25%</text>
<text x="2068.5" y="1435" font-family="Liberation Sans" font-size="28.1" fill="#3a3a40" stroke="#3a3a40" stroke-width="0.6" text-anchor="end" >NT$8,183,929.39</text>
<rect x="1599.5" y="1447" width="139.50" height="42.00" fill="#f5f3dc" />
<rect x="1741" y="1447" width="337.00" height="42.00" fill="#ffffff" />
<rect x="1599.5" y="1486" width="478.50" height="3.00" fill="#e1e3e7" />
<text x="1608" y="1477" font-family="Liberation Sans" font-size="26" fill="#3a3a3a" stroke="#3a3a3a" stroke-width="0.7" text-anchor="start" >30%</text>
<text x="2068.5" y="1477" font-family="Liberation Sans" font-size="28.1" fill="#3a3a40" stroke="#3a3a40" stroke-width="0.6" text-anchor="end" >NT$8,274,116.34</text>
<rect x="1599.5" y="1489" width="139.50" height="42.00" fill="#f5f3dc" />
<rect x="1741" y="1489" width="337.00" height="42.00" fill="#ffffff" />
<rect x="1599.5" y="1528" width="478.50" height="3.00" fill="#e1e3e7" />
<text x="1608" y="1519" font-family="Liberation Sans" font-size="26" fill="#3a3a3a" stroke="#3a3a3a" stroke-width="0.7" text-anchor="start" >35%</text>
<text x="2068.5" y="1519" font-family="Liberation Sans" font-size="28.1" fill="#3a3a40" stroke="#3a3a40" stroke-width="0.6" text-anchor="end" >NT$8,353,668.25</text>
<rect x="1599.5" y="1531" width="139.50" height="42.00" fill="#f5f3dc" />
<rect x="1741" y="1531" width="337.00" height="42.00" fill="#ffffff" />
<rect x="1599.5" y="1570" width="478.50" height="3.00" fill="#e1e3e7" />
<text x="1608" y="1561" font-family="Liberation Sans" font-size="26" fill="#3a3a3a" stroke="#3a3a3a" stroke-width="0.7" text-anchor="start" >40%</text>
<text x="2068.5" y="1561" font-family="Liberation Sans" font-size="28.1" fill="#3a3a40" stroke="#3a3a40" stroke-width="0.6" text-anchor="end" >NT$8,432,788.67</text>
<rect x="1599.5" y="1573" width="139.50" height="42.00" fill="#f5f3dc" />
<rect x="1741" y="1573" width="337.00" height="42.00" fill="#ffffff" />
<rect x="1599.5" y="1612" width="478.50" height="3.00" fill="#e1e3e7" />
<text x="1608" y="1603" font-family="Liberation Sans" font-size="26" fill="#3a3a3a" stroke="#3a3a3a" stroke-width="0.7" text-anchor="start" >45%</text>
<text x="2068.5" y="1603" font-family="Liberation Sans" font-size="28.1" fill="#3a3a40" stroke="#3a3a40" stroke-width="0.6" text-anchor="end" >NT$8,507,745.50</text>
<rect x="1599.5" y="1615" width="139.50" height="42.00" fill="#f5f3dc" />
<rect x="1741" y="1615" width="337.00" height="42.00" fill="#ffffff" />
<rect x="1599.5" y="1654" width="478.50" height="3.00" fill="#e1e3e7" />
<text x="1608" y="1645" font-family="Liberation Sans" font-size="26" fill="#3a3a3a" stroke="#3a3a3a" stroke-width="0.7" text-anchor="start" >50%</text>
<text x="2068.5" y="1645" font-family="Liberation Sans" font-size="28.1" fill="#3a3a40" stroke="#3a3a40" stroke-width="0.6" text-anchor="end" >NT$8,587,195.29</text>
<rect x="1599.5" y="1657" width="139.50" height="42.00" fill="#f5f3dc" />
<rect x="1741" y="1657" width="337.00" height="42.00" fill="#ffffff" />
<rect x="1599.5" y="1696" width="478.50" height="3.00" fill="#e1e3e7" />
<text x="1608" y="1687" font-family="Liberation Sans" font-size="26" fill="#3a3a3a" stroke="#3a3a3a" stroke-width="0.7" text-anchor="start" >55%</text>
<text x="2068.5" y="1687" font-family="Liberation Sans" font-size="28.1" fill="#3a3a40" stroke="#3a3a40" stroke-width="0.6" text-anchor="end" >NT$8,667,282.48</text>
<rect x="1599.5" y="1699" width="139.50" height="42.00" fill="#f5f3dc" />
<rect x="1741" y="1699" width="337.00" height="42.00" fill="#ffffff" />
<rect x="1599.5" y="1738" width="478.50" height="3.00" fill="#e1e3e7" />
<text x="1608" y="1729" font-family="Liberation Sans" font-size="26" fill="#3a3a3a" stroke="#3a3a3a" stroke-width="0.7" text-anchor="start" >60%</text>
<text x="2068.5" y="1729" font-family="Liberation Sans" font-size="28.1" fill="#3a3a40" stroke="#3a3a40" stroke-width="0.6" text-anchor="end" >NT$8,744,489.22</text>
<rect x="1599.5" y="1741" width="139.50" height="38.00" fill="#f5f3dc" />
<rect x="1741" y="1741" width="337.00" height="38.00" fill="#ffffff" />
<text x="1608" y="1771" font-family="Liberation Sans" font-size="26" fill="#3a3a3a" stroke="#3a3a3a" stroke-width="0.7" text-anchor="start" >65%</text>
<text x="2068.5" y="1771" font-family="Liberation Sans" font-size="28.1" fill="#3a3a40" stroke="#3a3a40" stroke-width="0.6" text-anchor="end" >NT$8,821,915.19</text>
<rect x="1738" y="397" width="3.00" height="1382.00" fill="#d3d6db" />
<rect x="2078" y="397" width="34.50" height="1382.00" fill="#f4f5f7" />
<path d="M2090,419 L2095,413 L2100,419 Z" fill="#777" />
<path d="M2090,1756 L2095,1762 L2100,1756 Z" fill="#777" />
<rect x="2088" y="434" width="14.00" height="1022.00" fill="#e4e6ea" stroke="#c4c8ce" stroke-width="1.5" rx="7" />
<rect x="900" y="1798" width="59.00" height="55.00" fill="url(#btng)" stroke="#b5bac3" stroke-width="2" rx="6" />
<rect x="969" y="1798" width="63.00" height="55.00" fill="url(#btng)" stroke="#b5bac3" stroke-width="2" rx="6" />
<rect x="1890" y="1798" width="59.00" height="55.00" fill="#dde1e7" stroke="#9aa3b0" stroke-width="2" rx="6" />
<rect x="1962" y="1798" width="60.00" height="55.00" fill="url(#btng)" stroke="#b5bac3" stroke-width="2" rx="6" />
<rect x="2034" y="1798" width="80.00" height="55.00" fill="url(#btng)" stroke="#b5bac3" stroke-width="2" rx="6" />
<text x="2074" y="1836" font-family="Liberation Sans" font-size="23.5" fill="#333" text-anchor="middle" >Close</text>
<path d="M913,1816 L946,1816 L929.5,1840 Z" fill="#f02848" />
<line x1="929.5" y1="1810" x2="929.5" y2="1842" stroke="#333" stroke-width="2" />
<line x1="920" y1="1822" x2="939" y2="1822" stroke="#fff" stroke-width="1.5" />
<line x1="923" y1="1828" x2="936" y2="1828" stroke="#fff" stroke-width="1.5" />
<path d="M985,1840 L1015,1810" fill="none" stroke="#f03050" stroke-width="5" />
<circle cx="988" cy="1815" r="5" fill="none" stroke="#f03050" stroke-width="3.5"/>
<circle cx="1012" cy="1836" r="5" fill="none" stroke="#f03050" stroke-width="3.5"/>
<rect x="1905" y="1813" width="29.00" height="23.00" fill="#fff" stroke="#222" stroke-width="3" />
<path d="M1910,1836 L1908,1842 L1916,1836" fill="#222" />
<rect x="1913" y="1822" width="13.00" height="8.00" fill="#f03050" />
<path d="M1988,1812 L1978,1812 L1978,1842 L2006,1842 L2006,1832" fill="none" stroke="#222" stroke-width="3" />
<path d="M1988,1832 C1990,1820 1998,1816 2008,1816" fill="none" stroke="#2a88f0" stroke-width="4" />
<path d="M2003,1808 L2012,1816 L2003,1824 Z" fill="#2a88f0" />
<rect x="17" y="1400" width="876.00" height="10.00" fill="#fff2cc" />
<rect x="17" y="1409" width="876.00" height="771.00" fill="#e3e6eb" stroke="#bfc5cf" stroke-width="2" />
<rect x="18" y="1410" width="874.00" height="75.00" fill="url(#titleg)" />
<text x="40" y="1465" font-family="Liberation Sans" font-size="42.3" fill="#b3bccb" font-weight="bold" text-anchor="start" >@RISK - Progress (1 CPUs)</text>
<rect x="31" y="1485" width="851.00" height="679.00" fill="#f0f0f0" stroke="#c3c8d0" stroke-width="3" />
<rect x="62.5" y="1516" width="785.50" height="118.50" fill="#ffffff" stroke="#b8bdc5" stroke-width="3" />
<rect x="69" y="1522" width="9.00" height="107.00" fill="#e0101e" />
<text x="455" y="1594" font-family="Liberation Sans" font-size="41.4" fill="#111" font-weight="bold" text-anchor="middle" >Simulating 1%</text>
<text x="62.5" y="1708" font-family="Liberation Sans" font-size="38.8" fill="#3a4258" stroke="#3a4258" stroke-width="0.6" text-anchor="start" textLength="159.5" lengthAdjust="spacingAndGlyphs">Iterations</text>
<rect x="344" y="1660" width="504.00" height="66.00" fill="#f4f4f4" stroke="#b5bac2" stroke-width="3" />
<text x="357" y="1708" font-family="Liberation Sans" font-size="41.5" fill="#1a2440" font-weight="bold" text-anchor="start" textLength="350.6" lengthAdjust="spacingAndGlyphs">8,054 of 1,000,000</text>
<text x="62.5" y="1805" font-family="Liberation Sans" font-size="38.8" fill="#3a4258" stroke="#3a4258" stroke-width="0.6" text-anchor="start" textLength="180.5" lengthAdjust="spacingAndGlyphs">Simulations</text>
<rect x="344" y="1757" width="504.00" height="66.00" fill="#f4f4f4" stroke="#b5bac2" stroke-width="3" />
<text x="357" y="1805" font-family="Liberation Sans" font-size="41.5" fill="#1a2440" font-weight="bold" text-anchor="start" textLength="104" lengthAdjust="spacingAndGlyphs">1 of 1</text>
<text x="62.5" y="1900" font-family="Liberation Sans" font-size="38.8" fill="#3a4258" stroke="#3a4258" stroke-width="0.6" text-anchor="start" textLength="132.5" lengthAdjust="spacingAndGlyphs">Runtime</text>
<rect x="344" y="1852" width="504.00" height="66.00" fill="#f4f4f4" stroke="#b5bac2" stroke-width="3" />
<text x="357" y="1900" font-family="Liberation Sans" font-size="41.5" fill="#1a2440" font-weight="bold" text-anchor="start" textLength="335" lengthAdjust="spacingAndGlyphs">0:00:11 of 0:25:11</text>
<text x="62.5" y="1996" font-family="Liberation Sans" font-size="38.8" fill="#3a4258" stroke="#3a4258" stroke-width="0.6" text-anchor="start" textLength="169.5" lengthAdjust="spacingAndGlyphs">Iters / Sec</text>
<rect x="344" y="1948" width="504.00" height="66.00" fill="#f4f4f4" stroke="#b5bac2" stroke-width="3" />
<text x="357" y="1996" font-family="Liberation Sans" font-size="41.5" fill="#1a2440" font-weight="bold" text-anchor="start" textLength="69" lengthAdjust="spacingAndGlyphs">711</text>
<rect x="344" y="2050" width="93.50" height="87.00" fill="#d8dde5" stroke="#8f9aab" stroke-width="2.5" rx="8" />
<rect x="455" y="2050" width="95.00" height="87.00" fill="url(#btng)" stroke="#b5bac2" stroke-width="2.5" rx="8" />
<rect x="565" y="2050" width="95.00" height="87.00" fill="url(#btng)" stroke="#b5bac2" stroke-width="2.5" rx="8" />
<rect x="752" y="2050" width="95.00" height="87.00" fill="url(#btng)" stroke="#b5bac2" stroke-width="2.5" rx="8" />
<path d="M378,2081 L402,2094 L378,2107 Z" fill="#1a50e0" stroke="#111" stroke-width="2.5" />
<rect x="491" y="2082" width="9.00" height="25.00" fill="#888" stroke="#333" stroke-width="2.5" rx="3" />
<rect x="509" y="2082" width="9.00" height="25.00" fill="#888" stroke="#333" stroke-width="2.5" rx="3" />
<rect x="597" y="2079" width="30.00" height="30.00" fill="#e8101e" stroke="#222" stroke-width="2.5" />
<polygon points="824.0,2094.0 818.5,2101.7 817.0,2111.0 807.7,2112.5 800.0,2118.0 792.3,2112.5 783.0,2111.0 781.5,2101.7 776.0,2094.0 781.5,2086.3 783.0,2077.0 792.3,2075.5 800.0,2070.0 807.7,2075.5 817.0,2077.0 818.5,2086.3" fill="#f4f4f4" stroke="#333" stroke-width="3" stroke-linejoin="round"/>
<circle cx="792" cy="2094" r="2.5" fill="#4aa0f0"/>
<circle cx="800" cy="2094" r="2.5" fill="#4aa0f0"/>
<circle cx="808" cy="2094" r="2.5" fill="#4aa0f0"/>
<rect x="2421" y="0" width="16.00" height="2201.00" fill="#ffffff" />
<rect x="0" y="0" width="17.00" height="2201.00" fill="#ffffff" />
<rect x="0" y="0" width="2437.00" height="23.50" fill="#ffffff" />
<rect x="0" y="2182" width="2437.00" height="19.00" fill="#ffffff" />
</svg></body></html>
